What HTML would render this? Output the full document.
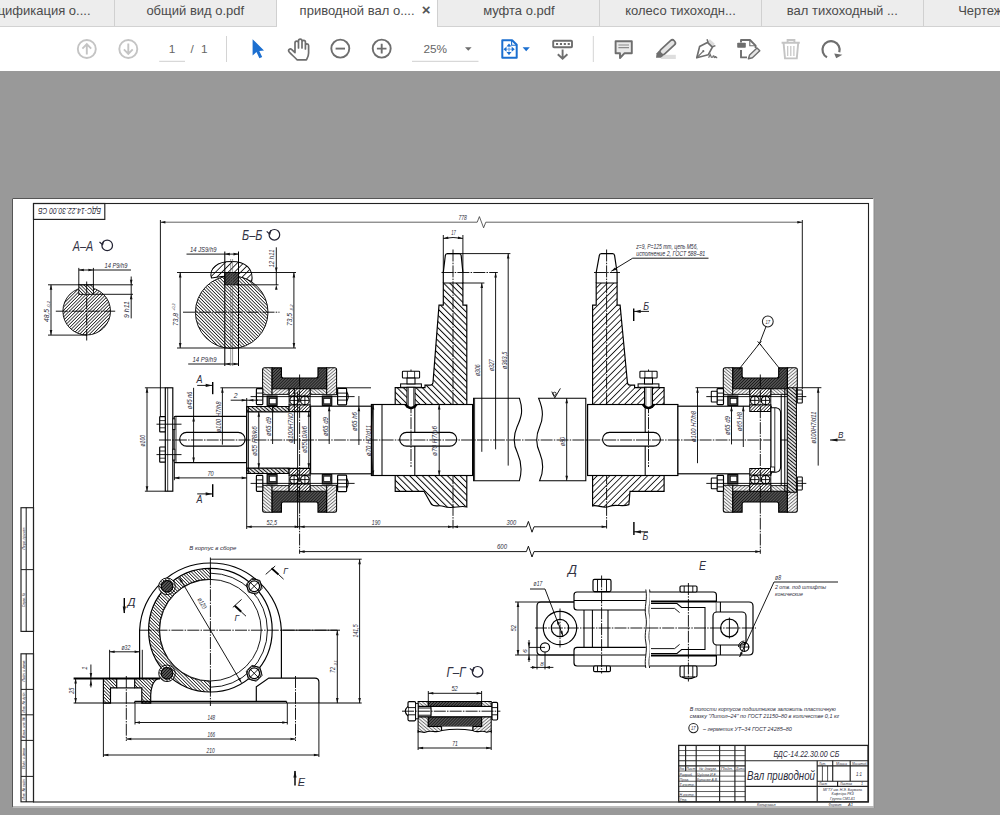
<!DOCTYPE html>
<html lang="ru"><head><meta charset="utf-8"><title>приводной вал о.pdf</title>
<style>
html,body{margin:0;padding:0}
body{width:1000px;height:815px;overflow:hidden;background:#999;position:relative;font-family:"Liberation Sans",sans-serif}
.tabbar{position:absolute;left:0;top:0;width:1000px;height:26px;background:#ededed;border-bottom:1px solid #d2d2d2}
.tab{position:absolute;top:0;height:26px;width:161.6px;box-sizing:border-box;border-right:1px solid #d0d0d0;color:#4b4b4b;font-size:13px;line-height:21px;text-align:center;white-space:nowrap}
.tab.act{background:#fff;height:27px}
.tab .x{position:absolute;left:145px;top:-1px;font-size:15px;font-weight:bold;color:#555}
.toolbar{position:absolute;left:0;top:27px;width:1000px;height:44px;background:#fff}
.tbi{position:absolute;left:0;top:0}
.pg{position:absolute;top:14px;font-size:11.8px;color:#666;line-height:16px}
#dwg{position:absolute;left:0;top:0}
#dwg text{font-family:"Liberation Sans",sans-serif;font-style:italic}
</style></head><body>
<svg id="dwg" width="1000" height="815" viewBox="0 0 1000 815">
<defs>
<pattern id="h1" width="2.35" height="2.35" patternUnits="userSpaceOnUse" patternTransform="rotate(45)"><rect width="2.35" height="2.35" fill="#fff"/><line x1="1.175" y1="0" x2="1.175" y2="2.35" stroke="#000" stroke-width="0.7"/></pattern>
<pattern id="h2" width="2.35" height="2.35" patternUnits="userSpaceOnUse" patternTransform="rotate(-45)"><rect width="2.35" height="2.35" fill="#fff"/><line x1="1.175" y1="0" x2="1.175" y2="2.35" stroke="#000" stroke-width="0.7"/></pattern>
<pattern id="hw1" width="4.45" height="4.45" patternUnits="userSpaceOnUse" patternTransform="rotate(45)"><rect width="4.45" height="4.45" fill="#fff"/><line x1="2.225" y1="0" x2="2.225" y2="4.45" stroke="#000" stroke-width="0.8"/></pattern>
<pattern id="hw2" width="4.45" height="4.45" patternUnits="userSpaceOnUse" patternTransform="rotate(-45)"><rect width="4.45" height="4.45" fill="#fff"/><line x1="2.225" y1="0" x2="2.225" y2="4.45" stroke="#000" stroke-width="1.0"/></pattern>
<pattern id="hd" width="2.1" height="2.1" patternUnits="userSpaceOnUse" patternTransform="rotate(45)"><rect width="2.1" height="2.1" fill="#5a5a5a"/><line x1="1.05" y1="0" x2="1.05" y2="2.1" stroke="#161616" stroke-width="0.85"/></pattern>
<pattern id="hm" width="2.5" height="2.5" patternUnits="userSpaceOnUse" patternTransform="rotate(-50)"><rect width="2.5" height="2.5" fill="#f2f2f2"/><line x1="1.25" y1="0" x2="1.25" y2="2.5" stroke="#444" stroke-width="0.62"/></pattern>
<pattern id="hm2" width="2.5" height="2.5" patternUnits="userSpaceOnUse" patternTransform="rotate(50)"><rect width="2.5" height="2.5" fill="#f2f2f2"/><line x1="1.25" y1="0" x2="1.25" y2="2.5" stroke="#444" stroke-width="0.62"/></pattern>
<pattern id="hc" width="2.7" height="2.7" patternUnits="userSpaceOnUse" patternTransform="rotate(-50)"><rect width="2.7" height="2.7" fill="#fff"/><line x1="1.35" y1="0" x2="1.35" y2="2.7" stroke="#111" stroke-width="1.15"/></pattern>
</defs>
<rect x="12" y="198" width="862" height="610" fill="#fff"/>
<path d="M12.5 807.5V198.5H873.5" fill="none" stroke="#555" stroke-width="1"/>
<path d="M12.5 807H873.5" fill="none" stroke="#777" stroke-width="1"/>
<path d="M874 199V808" fill="none" stroke="#8a8a8a" stroke-width="1"/>
<rect x="33.5" y="203.5" width="835" height="598.5" rx="0" stroke="#222" stroke-width="1.1" fill="none"/>
<rect x="33.5" y="203.5" width="71.3" height="15.9" rx="0" stroke="#222" stroke-width="1.17" fill="none"/>
<text x="101" y="207.6" font-size="8.6" fill="#2c2c3a" textLength="63" lengthAdjust="spacingAndGlyphs" transform="rotate(180 101 207.6)">БДС-14.22.30.00 СБ</text>
<rect x="21" y="507.7" width="12.5" height="123.7" rx="0" stroke="#222" stroke-width="1.17" fill="none"/>
<line x1="26.2" y1="507.7" x2="26.2" y2="631.4" stroke="#000" stroke-width="0.91"/>
<line x1="21" y1="569.6" x2="33.5" y2="569.6" stroke="#222" stroke-width="1.04"/>
<rect x="21" y="653.8" width="12.5" height="148" rx="0" stroke="#222" stroke-width="1.17" fill="none"/>
<line x1="26.2" y1="653.8" x2="26.2" y2="801.8" stroke="#000" stroke-width="0.91"/>
<line x1="21" y1="689.4" x2="33.5" y2="689.4" stroke="#222" stroke-width="1.04"/>
<line x1="21" y1="714.8" x2="33.5" y2="714.8" stroke="#222" stroke-width="1.04"/>
<line x1="21" y1="740.4" x2="33.5" y2="740.4" stroke="#222" stroke-width="1.04"/>
<line x1="21" y1="776.4" x2="33.5" y2="776.4" stroke="#222" stroke-width="1.04"/>
<text x="25.4" y="538" font-size="4.3" fill="#112" textLength="22.75" lengthAdjust="spacingAndGlyphs" transform="rotate(-90 25.4 538)" text-anchor="middle">Перв. примен.</text>
<text x="25.4" y="600" font-size="4.3" fill="#112" textLength="14" lengthAdjust="spacingAndGlyphs" transform="rotate(-90 25.4 600)" text-anchor="middle">Справ. №</text>
<text x="25.4" y="671" font-size="4.3" fill="#112" textLength="21" lengthAdjust="spacingAndGlyphs" transform="rotate(-90 25.4 671)" text-anchor="middle">Подп. и дата</text>
<text x="25.4" y="702" font-size="4.3" fill="#112" textLength="21" lengthAdjust="spacingAndGlyphs" transform="rotate(-90 25.4 702)" text-anchor="middle">Инв. № дубл.</text>
<text x="25.4" y="727.5" font-size="4.3" fill="#112" textLength="21" lengthAdjust="spacingAndGlyphs" transform="rotate(-90 25.4 727.5)" text-anchor="middle">Взам. инв. №</text>
<text x="25.4" y="758.5" font-size="4.3" fill="#112" textLength="21" lengthAdjust="spacingAndGlyphs" transform="rotate(-90 25.4 758.5)" text-anchor="middle">Подп. и дата</text>
<text x="25.4" y="789" font-size="4.3" fill="#112" textLength="21" lengthAdjust="spacingAndGlyphs" transform="rotate(-90 25.4 789)" text-anchor="middle">Инв. № подл.</text>
<rect x="678.7" y="745.4" width="189.3" height="56.4" rx="0" stroke="#222" stroke-width="1.3" fill="none"/>
<line x1="678.7" y1="750.52" x2="745.2" y2="750.52" stroke="#222" stroke-width="0.72"/>
<line x1="678.7" y1="755.65" x2="745.2" y2="755.65" stroke="#222" stroke-width="0.72"/>
<line x1="678.7" y1="760.77" x2="745.2" y2="760.77" stroke="#222" stroke-width="1.17"/>
<line x1="678.7" y1="765.9" x2="745.2" y2="765.9" stroke="#222" stroke-width="1.17"/>
<line x1="678.7" y1="771.02" x2="745.2" y2="771.02" stroke="#222" stroke-width="0.72"/>
<line x1="678.7" y1="776.15" x2="745.2" y2="776.15" stroke="#222" stroke-width="0.72"/>
<line x1="678.7" y1="781.27" x2="745.2" y2="781.27" stroke="#222" stroke-width="0.72"/>
<line x1="678.7" y1="786.4" x2="745.2" y2="786.4" stroke="#222" stroke-width="0.72"/>
<line x1="678.7" y1="791.52" x2="745.2" y2="791.52" stroke="#222" stroke-width="0.72"/>
<line x1="678.7" y1="796.65" x2="745.2" y2="796.65" stroke="#222" stroke-width="0.72"/>
<line x1="685.6" y1="745.4" x2="685.6" y2="771.02" stroke="#222" stroke-width="1.17"/>
<line x1="696.2" y1="745.4" x2="696.2" y2="801.8" stroke="#222" stroke-width="1.17"/>
<line x1="719.6" y1="745.4" x2="719.6" y2="801.8" stroke="#222" stroke-width="1.17"/>
<line x1="734.9" y1="745.4" x2="734.9" y2="801.8" stroke="#222" stroke-width="1.17"/>
<line x1="745.2" y1="745.4" x2="745.2" y2="801.8" stroke="#222" stroke-width="1.17"/>
<line x1="745.2" y1="760.77" x2="868" y2="760.77" stroke="#222" stroke-width="1.17"/>
<line x1="745.2" y1="786.4" x2="868" y2="786.4" stroke="#222" stroke-width="1.17"/>
<line x1="817.2" y1="760.77" x2="817.2" y2="801.8" stroke="#222" stroke-width="1.17"/>
<line x1="817.2" y1="765.9" x2="868" y2="765.9" stroke="#222" stroke-width="1.17"/>
<line x1="817.2" y1="781.27" x2="868" y2="781.27" stroke="#222" stroke-width="1.17"/>
<line x1="822.4" y1="765.9" x2="822.4" y2="781.27" stroke="#222" stroke-width="0.78"/>
<line x1="827.6" y1="765.9" x2="827.6" y2="781.27" stroke="#222" stroke-width="0.78"/>
<line x1="832.7" y1="760.77" x2="832.7" y2="781.27" stroke="#222" stroke-width="1.17"/>
<line x1="850.2" y1="760.77" x2="850.2" y2="781.27" stroke="#222" stroke-width="1.17"/>
<line x1="837.6" y1="781.27" x2="837.6" y2="786.4" stroke="#222" stroke-width="1.17"/>
<text x="806.4" y="757.3" font-size="9.6" fill="#2c2c3a" textLength="66" lengthAdjust="spacingAndGlyphs" text-anchor="middle">БДС-14.22.30.00 СБ</text>
<text x="747" y="779.6" font-size="12.4" fill="#2c2c3a" textLength="68" lengthAdjust="spacingAndGlyphs">Вал приводной</text>
<text x="679.2" y="770.4" font-size="3.8" fill="#2c2c3a" textLength="5.5" lengthAdjust="spacingAndGlyphs">Изм.</text>
<text x="686" y="770.4" font-size="3.8" fill="#2c2c3a" textLength="9.5" lengthAdjust="spacingAndGlyphs">Лист</text>
<text x="699" y="770.4" font-size="3.8" fill="#2c2c3a" textLength="18" lengthAdjust="spacingAndGlyphs">№ докум.</text>
<text x="721" y="770.4" font-size="3.8" fill="#2c2c3a" textLength="12" lengthAdjust="spacingAndGlyphs">Подп.</text>
<text x="736" y="770.4" font-size="3.8" fill="#2c2c3a" textLength="8.5" lengthAdjust="spacingAndGlyphs">Дата</text>
<text x="679.6" y="775.6" font-size="3.8" fill="#2c2c3a" textLength="13.3" lengthAdjust="spacingAndGlyphs">Разраб.</text>
<text x="679.6" y="780.73" font-size="3.8" fill="#2c2c3a" textLength="9.5" lengthAdjust="spacingAndGlyphs">Пров.</text>
<text x="679.6" y="785.85" font-size="3.8" fill="#2c2c3a" textLength="15.2" lengthAdjust="spacingAndGlyphs">Т.контр.</text>
<text x="679.6" y="796.1" font-size="3.8" fill="#2c2c3a" textLength="15.2" lengthAdjust="spacingAndGlyphs">Н.контр.</text>
<text x="679.6" y="801.23" font-size="3.8" fill="#2c2c3a" textLength="7.6" lengthAdjust="spacingAndGlyphs">Утв.</text>
<text x="697" y="775.6" font-size="3.8" fill="#2c2c3a" textLength="20" lengthAdjust="spacingAndGlyphs">Чуднов И.Е.</text>
<text x="697" y="780.7" font-size="3.8" fill="#2c2c3a" textLength="21" lengthAdjust="spacingAndGlyphs">Буланже А.В.</text>
<text x="819" y="765" font-size="3.6" fill="#2c2c3a" textLength="7" lengthAdjust="spacingAndGlyphs">Лит.</text>
<text x="836" y="765" font-size="3.6" fill="#2c2c3a" textLength="11" lengthAdjust="spacingAndGlyphs">Масса</text>
<text x="852" y="765" font-size="3.6" fill="#2c2c3a" textLength="14.5" lengthAdjust="spacingAndGlyphs">Масштаб</text>
<text x="859" y="776" font-size="5" fill="#2c2c3a" textLength="6" lengthAdjust="spacingAndGlyphs" text-anchor="middle">1:1</text>
<text x="819" y="785.4" font-size="3.6" fill="#2c2c3a" textLength="8" lengthAdjust="spacingAndGlyphs">Лист</text>
<text x="840" y="785.4" font-size="3.6" fill="#2c2c3a" textLength="12" lengthAdjust="spacingAndGlyphs">Листов</text>
<text x="861" y="785.4" font-size="3.6" fill="#2c2c3a">1</text>
<text x="842.6" y="790.8" font-size="4.4" fill="#2c2c3a" textLength="39" lengthAdjust="spacingAndGlyphs" text-anchor="middle">МГТУ им. Н.Э. Баумана</text>
<text x="842.6" y="795.2" font-size="4.4" fill="#2c2c3a" textLength="22" lengthAdjust="spacingAndGlyphs" text-anchor="middle">Кафедра РК3</text>
<text x="842.6" y="799.6" font-size="4.4" fill="#2c2c3a" textLength="25" lengthAdjust="spacingAndGlyphs" text-anchor="middle">Группа СМ1-61</text>
<text x="757" y="806" font-size="4" fill="#2c2c3a" textLength="18.5" lengthAdjust="spacingAndGlyphs">Копировал</text>
<text x="828.5" y="806" font-size="4" fill="#2c2c3a" textLength="13" lengthAdjust="spacingAndGlyphs">Формат</text>
<text x="848" y="806" font-size="4" fill="#2c2c3a" textLength="5" lengthAdjust="spacingAndGlyphs">А1</text>
<text x="689.7" y="711.4" font-size="6.2" fill="#2c2c3a" textLength="146" lengthAdjust="spacingAndGlyphs">В полости корпусов подшипников заложить пластичную</text>
<text x="689.7" y="718" font-size="6.2" fill="#2c2c3a" textLength="149.5" lengthAdjust="spacingAndGlyphs">смазку "Литол–24" по ГОСТ 21150–80 в количестве 0,1 кг</text>
<circle cx="693.4" cy="728.1" r="4.6" stroke="#222" stroke-width="1.04" fill="none"/>
<text x="693.3" y="730.2" font-size="5" fill="#2c2c3a" textLength="4.6" lengthAdjust="spacingAndGlyphs" text-anchor="middle">17</text>
<text x="702.9" y="730.8" font-size="6.2" fill="#2c2c3a" textLength="89" lengthAdjust="spacingAndGlyphs">– герметик УТ–34 ГОСТ 24285–80</text>
<text x="72.8" y="250.8" font-size="14.5" fill="#334" textLength="20.4" lengthAdjust="spacingAndGlyphs">А–А</text>
<circle cx="107.2" cy="245.4" r="5.3" stroke="#223" stroke-width="1.23" fill="none"/>
<path d="M99.5 242L102.6 244.8L103.7 240.8" stroke="#223" stroke-width="1.17" fill="none"/>
<circle cx="86.7" cy="311.2" r="23.8" fill="url(#h1)" stroke="#000" stroke-width="0.9"/>
<rect x="78.8" y="284.8" width="14.6" height="9.5" fill="url(#h2)" stroke="#000" stroke-width="0.9"/>
<line x1="78.8" y1="267.9" x2="78.8" y2="285" stroke="#000" stroke-width="0.91"/>
<line x1="93.4" y1="267.9" x2="93.4" y2="285" stroke="#000" stroke-width="0.91"/>
<line x1="78.8" y1="270" x2="93.4" y2="270" stroke="#000" stroke-width="0.91"/>
<path d="M78.8 270L83.8 268.7L83.8 271.3Z" fill="#111"/>
<path d="M93.4 270L88.4 271.3L88.4 268.7Z" fill="#111"/>
<line x1="93.4" y1="270" x2="131" y2="270" stroke="#000" stroke-width="0.91"/>
<text x="104.5" y="267.8" font-size="6.8" fill="#2c2c3a" textLength="23" lengthAdjust="spacingAndGlyphs">14 P9/h9</text>
<line x1="48" y1="284.8" x2="133" y2="284.8" stroke="#000" stroke-width="0.91"/>
<line x1="93.4" y1="294.3" x2="133" y2="294.3" stroke="#000" stroke-width="0.91"/>
<line x1="131.2" y1="276.5" x2="131.2" y2="318.4" stroke="#000" stroke-width="0.91"/>
<path d="M131.2 284.8L129.9 279.8L132.5 279.8Z" fill="#111"/>
<path d="M131.2 294.3L132.5 299.3L129.9 299.3Z" fill="#111"/>
<text x="129.3" y="318" font-size="6.8" fill="#2c2c3a" textLength="17" lengthAdjust="spacingAndGlyphs" transform="rotate(-90 129.3 318)">9 h11</text>
<line x1="48" y1="335.1" x2="87" y2="335.1" stroke="#000" stroke-width="0.91"/>
<line x1="51" y1="284.8" x2="51" y2="335.1" stroke="#000" stroke-width="0.91"/>
<path d="M51 284.8L52.3 289.8L49.7 289.8Z" fill="#111"/>
<path d="M51 335.1L49.7 330.1L52.3 330.1Z" fill="#111"/>
<text x="49" y="322" font-size="6.8" fill="#2c2c3a" textLength="13" lengthAdjust="spacingAndGlyphs" transform="rotate(-90 49 322)">48,5</text>
<text x="50.3" y="308" font-size="4.2" fill="#2c2c3a" textLength="7" lengthAdjust="spacingAndGlyphs" transform="rotate(-90 50.3 308)">-0,2</text>
<line x1="55.8" y1="311.2" x2="115.2" y2="311.2" stroke="#000" stroke-width="0.91" stroke-dasharray="12 1.2 1.5 1.2"/>
<line x1="86.7" y1="281.5" x2="86.7" y2="340.5" stroke="#000" stroke-width="0.91" stroke-dasharray="12 1.2 1.5 1.2"/>
<text x="242" y="240" font-size="14.3" fill="#334" textLength="20.4" lengthAdjust="spacingAndGlyphs">Б–Б</text>
<circle cx="274.4" cy="234.8" r="5.3" stroke="#223" stroke-width="1.23" fill="none"/>
<path d="M266.7 231.4L269.8 234.2L270.9 230.2" stroke="#223" stroke-width="1.17" fill="none"/>
<path d="M211.5 278C208.5 268 218 261.6 231 261.6C245 261.4 254.5 268.5 251.5 282.5C246 277.8 240 276.3 231.7 275.9C223 276 216.5 277 211.5 278Z" fill="url(#hw1)" stroke="#000" stroke-width="1.04"/>
<circle cx="231.7" cy="312.2" r="36.3" fill="url(#h2)" stroke="#000" stroke-width="0.9"/>
<rect x="224.8" y="272.5" width="13.7" height="12.3" fill="url(#hd)" stroke="#000" stroke-width="0.9"/>
<line x1="224.8" y1="251.5" x2="224.8" y2="366" stroke="#000" stroke-width="1.04"/>
<line x1="238.5" y1="251.5" x2="238.5" y2="366" stroke="#000" stroke-width="1.04"/>
<line x1="230.7" y1="259" x2="230.7" y2="366" stroke="#555" stroke-width="0.59"/>
<line x1="232.6" y1="259" x2="232.6" y2="366" stroke="#555" stroke-width="0.59"/>
<line x1="186.5" y1="254.1" x2="224.8" y2="254.1" stroke="#000" stroke-width="0.91"/>
<line x1="224.8" y1="254.1" x2="238.5" y2="254.1" stroke="#000" stroke-width="0.91"/>
<path d="M224.8 254.1L229.8 252.8L229.8 255.4Z" fill="#111"/>
<path d="M238.5 254.1L233.5 255.4L233.5 252.8Z" fill="#111"/>
<text x="190" y="251.8" font-size="6.8" fill="#2c2c3a" textLength="26.5" lengthAdjust="spacingAndGlyphs">14 JS9/h9</text>
<line x1="188.2" y1="364" x2="224.8" y2="364" stroke="#000" stroke-width="0.91"/>
<line x1="224.8" y1="364" x2="238.5" y2="364" stroke="#000" stroke-width="0.91"/>
<path d="M224.8 364L229.8 362.7L229.8 365.3Z" fill="#111"/>
<path d="M238.5 364L233.5 365.3L233.5 362.7Z" fill="#111"/>
<text x="192.5" y="361.7" font-size="6.8" fill="#2c2c3a" textLength="24" lengthAdjust="spacingAndGlyphs">14 P9/h9</text>
<line x1="177" y1="272.5" x2="296" y2="272.5" stroke="#000" stroke-width="0.91"/>
<line x1="177" y1="348" x2="296" y2="348" stroke="#000" stroke-width="0.91"/>
<line x1="180.2" y1="272.5" x2="180.2" y2="348" stroke="#000" stroke-width="0.91"/>
<path d="M180.2 272.5L181.5 277.5L178.9 277.5Z" fill="#111"/>
<path d="M180.2 348L178.9 343L181.5 343Z" fill="#111"/>
<line x1="293.9" y1="272.5" x2="293.9" y2="348" stroke="#000" stroke-width="0.91"/>
<path d="M293.9 272.5L295.2 277.5L292.6 277.5Z" fill="#111"/>
<path d="M293.9 348L292.6 343L295.2 343Z" fill="#111"/>
<text x="178.2" y="326" font-size="6.8" fill="#2c2c3a" textLength="13" lengthAdjust="spacingAndGlyphs" transform="rotate(-90 178.2 326)">73,8</text>
<text x="174.5" y="311" font-size="4.2" fill="#2c2c3a" textLength="7.5" lengthAdjust="spacingAndGlyphs" transform="rotate(-90 174.5 311)">+0,2</text>
<text x="291.8" y="326" font-size="6.8" fill="#2c2c3a" textLength="13" lengthAdjust="spacingAndGlyphs" transform="rotate(-90 291.8 326)">73,5</text>
<text x="293.2" y="311.5" font-size="4.2" fill="#2c2c3a" textLength="7" lengthAdjust="spacingAndGlyphs" transform="rotate(-90 293.2 311.5)">-0,2</text>
<line x1="238.5" y1="284.8" x2="278.5" y2="284.8" stroke="#000" stroke-width="0.91"/>
<line x1="276.3" y1="247.3" x2="276.3" y2="285" stroke="#000" stroke-width="0.91"/>
<path d="M276.3 272.5L275 267.5L277.6 267.5Z" fill="#111"/>
<path d="M276.3 284.8L277.6 289.8L275 289.8Z" fill="#111"/>
<text x="274.4" y="267.5" font-size="6.8" fill="#2c2c3a" textLength="18" lengthAdjust="spacingAndGlyphs" transform="rotate(-90 274.4 267.5)">12 h11</text>
<line x1="183" y1="312.2" x2="279.5" y2="312.2" stroke="#000" stroke-width="0.91" stroke-dasharray="12 1.2 1.5 1.2"/>
<line x1="160.4" y1="220" x2="160.4" y2="416.5" stroke="#000" stroke-width="0.91"/>
<line x1="802.3" y1="220" x2="802.3" y2="389" stroke="#000" stroke-width="0.91"/>
<path d="M160.4 222.2H477.2L479.4 216.6L483.6 227.8L485.8 222.2H802.3" stroke="#333" stroke-width="0.78" fill="none"/>
<path d="M160.4 222.2L165.4 220.9L165.4 223.5Z" fill="#111"/>
<path d="M802.3 222.2L797.3 223.5L797.3 220.9Z" fill="#111"/>
<text x="458.4" y="220.3" font-size="6.8" fill="#2c2c3a" textLength="8.5" lengthAdjust="spacingAndGlyphs">778</text>
<path d="M443.3 283H462.9V305.2H466.8V404.5H395.2V387.7H425V385.2H430.4Q432.7 385 433 382.4L439 305.2H443.3Z" fill="url(#hw2)" stroke="#000" stroke-width="1.17"/>
<path d="M395.2 475.5H466.8V507C460 505 452 509.5 444 506.5C439 504.5 435 507.5 431.6 504.6L424 491.3H395.2Z" fill="url(#hw2)" stroke="#000" stroke-width="1.17"/>
<path d="M443.3 283V272.5L445.3 255.6Q445.5 253.6 447.3 253.6H459.2Q461 253.6 461.2 255.6L462.9 272.5V283" stroke="#000" stroke-width="1.17" fill="none"/>
<path d="M596.2 283H617.1V305.2H620.1L627.4 382.4Q627.7 385 630 385.2H634.6V387.7H664.1V404.5H592.6V305.2H596.2Z" fill="url(#hw1)" stroke="#000" stroke-width="1.17"/>
<path d="M592.6 475.5H664.1V491.3H630L628.9 504.6C622 507.5 616 503.5 609 506.5C603 509 598 504.5 592.6 505.9Z" fill="url(#hw1)" stroke="#000" stroke-width="1.17"/>
<path d="M596.2 283V272.5L599.3 255.6Q599.5 253.6 601.3 253.6H612.6Q614.4 253.6 614.6 255.6L617.1 272.5V283" stroke="#000" stroke-width="1.17" fill="none"/>
<line x1="453" y1="249.5" x2="453" y2="528.5" stroke="#000" stroke-width="0.91" stroke-dasharray="12 1.2 1.5 1.2"/>
<line x1="606.6" y1="249.5" x2="606.6" y2="528.5" stroke="#000" stroke-width="0.91" stroke-dasharray="12 1.2 1.5 1.2"/>
<line x1="443.3" y1="235" x2="443.3" y2="272.5" stroke="#000" stroke-width="0.91"/>
<line x1="462.9" y1="235" x2="462.9" y2="272.5" stroke="#000" stroke-width="0.91"/>
<path d="M443.3 238.4Q453 236.6 462.9 238.4" stroke="#000" stroke-width="0.91" fill="none"/>
<path d="M443.3 238.4L448.07 236.42L448.43 238.99Z" fill="#111"/>
<path d="M462.9 238.4L457.77 238.99L458.13 236.42Z" fill="#111"/>
<text x="451.2" y="234.6" font-size="6.8" fill="#2c2c3a" textLength="4.6" lengthAdjust="spacingAndGlyphs">17</text>
<line x1="447" y1="253.6" x2="510.4" y2="253.6" stroke="#000" stroke-width="0.91"/>
<line x1="441.5" y1="272.5" x2="497.8" y2="272.5" stroke="#000" stroke-width="0.91" stroke-dasharray="12 1.2 1.5 1.2"/>
<line x1="462.9" y1="283" x2="484.4" y2="283" stroke="#000" stroke-width="0.91"/>
<line x1="594" y1="272.5" x2="620" y2="272.5" stroke="#000" stroke-width="0.91" stroke-dasharray="12 1.2 1.5 1.2"/>
<path d="M611.3 271.2L632.7 258.2H708.5" stroke="#000" stroke-width="0.91" fill="none"/>
<path d="M611.3 271.2L614.92 267.51L616.26 269.74Z" fill="#111"/>
<text x="636.3" y="248.8" font-size="7" fill="#2c2c3a" textLength="61.5" lengthAdjust="spacingAndGlyphs">z=9, P=125 mm, цепь М56,</text>
<text x="636.3" y="256.2" font-size="7" fill="#2c2c3a" textLength="69" lengthAdjust="spacingAndGlyphs">исполнение 2, ГОСТ 588–81</text>
<line x1="633.7" y1="308.5" x2="633.7" y2="321" stroke="#000" stroke-width="1.43"/>
<line x1="633.7" y1="311.4" x2="649" y2="311.4" stroke="#000" stroke-width="0.91"/>
<path d="M634.2 311.4L640.7 309.8L640.7 313Z" fill="#111"/>
<text x="643.2" y="310.2" font-size="10.4" fill="#2c2c3a" textLength="5.8" lengthAdjust="spacingAndGlyphs">Б</text>
<line x1="633.9" y1="522" x2="633.9" y2="535" stroke="#000" stroke-width="1.43"/>
<line x1="633.9" y1="531.8" x2="648" y2="531.8" stroke="#000" stroke-width="0.91"/>
<path d="M634.4 531.8L640.9 530.2L640.9 533.4Z" fill="#111"/>
<text x="642.4" y="540.4" font-size="10.4" fill="#2c2c3a" textLength="5.8" lengthAdjust="spacingAndGlyphs">Б</text>
<rect x="174.1" y="416.4" width="72.6" height="46.2" rx="1.2" stroke="#000" stroke-width="1.17" fill="#fff"/>
<line x1="176" y1="416.4" x2="176" y2="462.6" stroke="#000" stroke-width="0.78"/>
<rect x="179.7" y="432.3" width="65.4" height="13.8" rx="6.9" stroke="#000" stroke-width="1.17" fill="#fff"/>
<rect x="246.7" y="411.8" width="64" height="56.4" rx="0" stroke="#000" stroke-width="1.04" fill="#fff"/>
<path d="M246.7 406.6H289V411.8H246.7Z" fill="url(#hc)" stroke="#000" stroke-width="1.04"/>
<path d="M246.7 468.2H289V473.4H246.7Z" fill="url(#hc)" stroke="#000" stroke-width="1.04"/>
<line x1="246.7" y1="398" x2="246.7" y2="529" stroke="#000" stroke-width="0.91"/>
<line x1="248.4" y1="406.6" x2="248.4" y2="473.4" stroke="#000" stroke-width="0.91"/>
<rect x="310.6" y="406.2" width="61" height="67.6" rx="0" stroke="#000" stroke-width="1.17" fill="#fff"/>
<rect x="371.4" y="404.5" width="101.4" height="71" rx="0" stroke="#000" stroke-width="1.17" fill="#fff"/>
<line x1="373" y1="404.5" x2="373" y2="475.5" stroke="#000" stroke-width="0.78"/>
<line x1="382" y1="404.5" x2="382" y2="475.5" stroke="#000" stroke-width="1.04"/>
<line x1="414.8" y1="406" x2="414.8" y2="475.5" stroke="#000" stroke-width="1.04"/>
<path d="M373 404.5Q369.8 440 373 475.5" stroke="#000" stroke-width="0.78" fill="none"/>
<path d="M473.6 398.2H519.4C523.5 411 521.5 417 517 427C513.5 435 513.5 445 517.5 453C521.5 462 522.5 470 519.4 480.7H473.6Z" stroke="#000" stroke-width="1.1" fill="#fff"/>
<path d="M585.8 398.2H538.6C544 411 543 419 539.6 427C536 435 536 445 539.8 453C543.5 462 544 471 539.6 480.7H585.8Z" stroke="#000" stroke-width="1.1" fill="#fff"/>
<line x1="472.6" y1="404.5" x2="472.6" y2="475.5" stroke="#000" stroke-width="1.04"/>
<line x1="474.6" y1="398.2" x2="474.6" y2="480.7" stroke="#000" stroke-width="0.78"/>
<line x1="587.6" y1="404.5" x2="587.6" y2="475.5" stroke="#000" stroke-width="1.04"/>
<rect x="587.6" y="404.5" width="90.3" height="71" rx="0" stroke="#000" stroke-width="1.17" fill="#fff"/>
<line x1="645.2" y1="404.5" x2="645.2" y2="475.5" stroke="#000" stroke-width="1.04"/>
<rect x="677.9" y="406.2" width="93.2" height="67.6" rx="0" stroke="#000" stroke-width="1.17" fill="#fff"/>
<rect x="399.7" y="432.3" width="57" height="13.8" rx="6.9" stroke="#000" stroke-width="1.17" fill="#fff"/>
<rect x="602.6" y="432.3" width="57.8" height="13.8" rx="6.9" stroke="#000" stroke-width="1.17" fill="#fff"/>
<path d="M551.8 391.6L554.8 397.8L560.4 388.4" stroke="#000" stroke-width="0.91" fill="none"/>
<circle cx="554.6" cy="393.8" r="1.6" stroke="#000" stroke-width="0.78" fill="none"/>
<rect x="165.3" y="387.8" width="7.5" height="103.4" rx="0" stroke="#000" stroke-width="1.17" fill="#fff"/>
<line x1="167.7" y1="387.8" x2="167.7" y2="491.2" stroke="#000" stroke-width="0.78"/>
<rect x="159.7" y="416.6" width="5.6" height="15.2" rx="0.6" stroke="#000" stroke-width="1.17" fill="#fff"/>
<line x1="159.7" y1="420.6" x2="165.3" y2="420.6" stroke="#000" stroke-width="0.78"/>
<line x1="159.7" y1="427.8" x2="165.3" y2="427.8" stroke="#000" stroke-width="0.78"/>
<rect x="172.8" y="418.8" width="2.1" height="10.8" rx="0" stroke="#000" stroke-width="0.91" fill="#fff"/>
<line x1="156.5" y1="424.2" x2="181.5" y2="424.2" stroke="#000" stroke-width="0.91"/>
<rect x="159.7" y="447" width="5.6" height="15.2" rx="0.6" stroke="#000" stroke-width="1.17" fill="#fff"/>
<line x1="159.7" y1="451" x2="165.3" y2="451" stroke="#000" stroke-width="0.78"/>
<line x1="159.7" y1="458.2" x2="165.3" y2="458.2" stroke="#000" stroke-width="0.78"/>
<rect x="172.8" y="449.2" width="2.1" height="10.8" rx="0" stroke="#000" stroke-width="0.91" fill="#fff"/>
<line x1="156.5" y1="454.6" x2="181.5" y2="454.6" stroke="#000" stroke-width="0.91"/>
<line x1="159" y1="440" x2="790" y2="440" stroke="#000" stroke-width="0.91" stroke-dasharray="12 1.2 1.5 1.2"/>
<line x1="481.8" y1="283" x2="481.8" y2="451.8" stroke="#000" stroke-width="0.91"/>
<path d="M481.8 283L483.1 288L480.5 288Z" fill="#111"/>
<text x="480.2" y="376" font-size="6.8" fill="#2c2c3a" textLength="11.6" lengthAdjust="spacingAndGlyphs" transform="rotate(-90 480.2 376)">ø306</text>
<line x1="495.6" y1="272.5" x2="495.6" y2="449.3" stroke="#000" stroke-width="0.91"/>
<path d="M495.6 272.5L496.9 277.5L494.3 277.5Z" fill="#111"/>
<text x="494" y="371" font-size="6.8" fill="#2c2c3a" textLength="11.6" lengthAdjust="spacingAndGlyphs" transform="rotate(-90 494 371)">ø327</text>
<line x1="508.2" y1="253.6" x2="508.2" y2="465.6" stroke="#000" stroke-width="0.91"/>
<path d="M508.2 253.6L509.5 258.6L506.9 258.6Z" fill="#111"/>
<text x="506.6" y="369" font-size="6.8" fill="#2c2c3a" textLength="17.4" lengthAdjust="spacingAndGlyphs" transform="rotate(-90 506.6 369)">ø363,5</text>
<path d="M262.6 369.8Q262.6 367.8 264.6 367.8H272.1V394.8H262.6Z" fill="url(#hm)" stroke="#000" stroke-width="1.04"/>
<path d="M336.6 369.8Q336.6 367.8 334.6 367.8H326.6V394.8H336.6Z" fill="url(#hm2)" stroke="#000" stroke-width="1.04"/>
<path d="M272.1 367.8H281.4V376Q281.4 378 283.4 378H316Q318 378 318 376V367.8H326.6V388.8H272.1Z" fill="url(#hd)" stroke="#000" stroke-width="1.17"/>
<path d="M272.1 388.8H289.1V394.4H272.1Z" fill="url(#hm2)" stroke="#000" stroke-width="0.91"/>
<path d="M310.1 388.8H326.6V394.4H310.1Z" fill="url(#hm)" stroke="#000" stroke-width="0.91"/>
<path d="M289.1 388.8H310.1V396.2H289.1Z" fill="url(#h1)" stroke="#000" stroke-width="1.04"/>
<path d="M289.1 404.8H310.1V411.6H289.1Z" fill="url(#h1)" stroke="#000" stroke-width="1.04"/>
<rect x="289.1" y="396.2" width="21" height="8.6" rx="0" stroke="#000" stroke-width="0.91" fill="#fff"/>
<circle cx="294.1" cy="400.4" r="4.3" stroke="#000" stroke-width="1.17" fill="#fff"/>
<line x1="290.1" y1="400.4" x2="298.1" y2="400.4" stroke="#000" stroke-width="0.91"/>
<line x1="294.1" y1="396.5" x2="294.1" y2="404.3" stroke="#000" stroke-width="0.91"/>
<circle cx="304.9" cy="400.4" r="4.3" stroke="#000" stroke-width="1.17" fill="#fff"/>
<line x1="300.9" y1="400.4" x2="308.9" y2="400.4" stroke="#000" stroke-width="0.91"/>
<line x1="304.9" y1="396.5" x2="304.9" y2="404.3" stroke="#000" stroke-width="0.91"/>
<rect x="267.1" y="396" width="10" height="9.4" rx="0" stroke="#000" stroke-width="1.04" fill="#4a4a4a"/>
<rect x="269.6" y="398.6" width="6.5" height="5.2" rx="0" stroke="#000" stroke-width="0.65" fill="#fff"/>
<rect x="322.3" y="396" width="9.5" height="9.4" rx="0" stroke="#000" stroke-width="1.04" fill="#4a4a4a"/>
<rect x="323.8" y="398.6" width="6.5" height="5.2" rx="0" stroke="#000" stroke-width="0.65" fill="#fff"/>
<rect x="256.4" y="388.6" width="6.4" height="16" rx="0.8" stroke="#000" stroke-width="1.17" fill="#fff"/>
<line x1="256.4" y1="393.1" x2="262.8" y2="393.1" stroke="#000" stroke-width="0.91"/>
<line x1="256.4" y1="400.1" x2="262.8" y2="400.1" stroke="#000" stroke-width="0.91"/>
<rect x="337.6" y="388.4" width="9" height="16.4" rx="0.8" stroke="#000" stroke-width="1.17" fill="#fff"/>
<line x1="337.6" y1="393.1" x2="346.6" y2="393.1" stroke="#000" stroke-width="0.91"/>
<line x1="337.6" y1="400.1" x2="346.6" y2="400.1" stroke="#000" stroke-width="0.91"/>
<path d="M346.6 391.6Q349.8 396.6 346.6 401.6" stroke="#000" stroke-width="1.04" fill="none"/>
<line x1="250.6" y1="396.6" x2="354.6" y2="396.6" stroke="#000" stroke-width="0.91"/>
<path d="M262.6 510.2Q262.6 512.2 264.6 512.2H272.1V485.2H262.6Z" fill="url(#hm)" stroke="#000" stroke-width="1.04"/>
<path d="M336.6 510.2Q336.6 512.2 334.6 512.2H326.6V485.2H336.6Z" fill="url(#hm2)" stroke="#000" stroke-width="1.04"/>
<path d="M272.1 512.2H281.4V504Q281.4 502 283.4 502H316Q318 502 318 504V512.2H326.6V491.2H272.1Z" fill="url(#hd)" stroke="#000" stroke-width="1.17"/>
<path d="M272.1 491.2H289.1V485.6H272.1Z" fill="url(#hm2)" stroke="#000" stroke-width="0.91"/>
<path d="M310.1 491.2H326.6V485.6H310.1Z" fill="url(#hm)" stroke="#000" stroke-width="0.91"/>
<path d="M289.1 491.2H310.1V483.8H289.1Z" fill="url(#h1)" stroke="#000" stroke-width="1.04"/>
<path d="M289.1 475.2H310.1V468.4H289.1Z" fill="url(#h1)" stroke="#000" stroke-width="1.04"/>
<rect x="289.1" y="475.2" width="21" height="8.6" rx="0" stroke="#000" stroke-width="0.91" fill="#fff"/>
<circle cx="294.1" cy="479.6" r="4.3" stroke="#000" stroke-width="1.17" fill="#fff"/>
<line x1="290.1" y1="479.6" x2="298.1" y2="479.6" stroke="#000" stroke-width="0.91"/>
<line x1="294.1" y1="483.5" x2="294.1" y2="475.7" stroke="#000" stroke-width="0.91"/>
<circle cx="304.9" cy="479.6" r="4.3" stroke="#000" stroke-width="1.17" fill="#fff"/>
<line x1="300.9" y1="479.6" x2="308.9" y2="479.6" stroke="#000" stroke-width="0.91"/>
<line x1="304.9" y1="483.5" x2="304.9" y2="475.7" stroke="#000" stroke-width="0.91"/>
<rect x="267.1" y="474.6" width="10" height="9.4" rx="0" stroke="#000" stroke-width="1.04" fill="#4a4a4a"/>
<rect x="269.6" y="476.2" width="6.5" height="5.2" rx="0" stroke="#000" stroke-width="0.65" fill="#fff"/>
<rect x="322.3" y="474.6" width="9.5" height="9.4" rx="0" stroke="#000" stroke-width="1.04" fill="#4a4a4a"/>
<rect x="323.8" y="476.2" width="6.5" height="5.2" rx="0" stroke="#000" stroke-width="0.65" fill="#fff"/>
<rect x="256.4" y="475.4" width="6.4" height="16" rx="0.8" stroke="#000" stroke-width="1.17" fill="#fff"/>
<line x1="256.4" y1="479.9" x2="262.8" y2="479.9" stroke="#000" stroke-width="0.91"/>
<line x1="256.4" y1="486.9" x2="262.8" y2="486.9" stroke="#000" stroke-width="0.91"/>
<rect x="337.6" y="475.2" width="9" height="16.4" rx="0.8" stroke="#000" stroke-width="1.17" fill="#fff"/>
<line x1="337.6" y1="479.9" x2="346.6" y2="479.9" stroke="#000" stroke-width="0.91"/>
<line x1="337.6" y1="486.9" x2="346.6" y2="486.9" stroke="#000" stroke-width="0.91"/>
<path d="M346.6 478.4Q349.8 483.4 346.6 488.4" stroke="#000" stroke-width="1.04" fill="none"/>
<line x1="250.6" y1="483.4" x2="354.6" y2="483.4" stroke="#000" stroke-width="0.91"/>
<line x1="299.6" y1="374.5" x2="299.6" y2="553.8" stroke="#000" stroke-width="0.91" stroke-dasharray="12 1.2 1.5 1.2"/>
<path d="M723.3 369.8Q723.3 367.8 725.3 367.8H732.8V394.8H723.3Z" fill="url(#hm)" stroke="#000" stroke-width="1.04"/>
<path d="M797.3 369.8Q797.3 367.8 795.3 367.8H787.3V394.8H797.3Z" fill="url(#hm2)" stroke="#000" stroke-width="1.04"/>
<path d="M732.8 367.8H742.1V376Q742.1 378 744.1 378H776.7Q778.7 378 778.7 376V367.8H787.3V388.8H732.8Z" fill="url(#hd)" stroke="#000" stroke-width="1.17"/>
<path d="M732.8 388.8H749.8V394.4H732.8Z" fill="url(#hm2)" stroke="#000" stroke-width="0.91"/>
<path d="M770.8 388.8H787.3V394.4H770.8Z" fill="url(#hm)" stroke="#000" stroke-width="0.91"/>
<path d="M749.8 388.8H770.8V396.2H749.8Z" fill="url(#h1)" stroke="#000" stroke-width="1.04"/>
<path d="M749.8 404.8H770.8V411.6H749.8Z" fill="url(#h1)" stroke="#000" stroke-width="1.04"/>
<rect x="749.8" y="396.2" width="21" height="8.6" rx="0" stroke="#000" stroke-width="0.91" fill="#fff"/>
<circle cx="754.8" cy="400.4" r="4.3" stroke="#000" stroke-width="1.17" fill="#fff"/>
<line x1="750.8" y1="400.4" x2="758.8" y2="400.4" stroke="#000" stroke-width="0.91"/>
<line x1="754.8" y1="396.5" x2="754.8" y2="404.3" stroke="#000" stroke-width="0.91"/>
<circle cx="765.6" cy="400.4" r="4.3" stroke="#000" stroke-width="1.17" fill="#fff"/>
<line x1="761.6" y1="400.4" x2="769.6" y2="400.4" stroke="#000" stroke-width="0.91"/>
<line x1="765.6" y1="396.5" x2="765.6" y2="404.3" stroke="#000" stroke-width="0.91"/>
<rect x="727.8" y="396" width="10" height="9.4" rx="0" stroke="#000" stroke-width="1.04" fill="#4a4a4a"/>
<rect x="730.3" y="398.6" width="6.5" height="5.2" rx="0" stroke="#000" stroke-width="0.65" fill="#fff"/>
<rect x="717.1" y="388.6" width="6.4" height="16" rx="0.8" stroke="#000" stroke-width="1.17" fill="#fff"/>
<line x1="717.1" y1="393.1" x2="723.5" y2="393.1" stroke="#000" stroke-width="0.91"/>
<line x1="717.1" y1="400.1" x2="723.5" y2="400.1" stroke="#000" stroke-width="0.91"/>
<rect x="711.3" y="391.2" width="5.8" height="10.8" rx="0.6" stroke="#000" stroke-width="1.04" fill="#fff"/>
<rect x="797.3" y="390.1" width="5" height="13" rx="0.6" stroke="#000" stroke-width="1.04" fill="#fff"/>
<line x1="797.3" y1="394.1" x2="802.3" y2="394.1" stroke="#000" stroke-width="0.78"/>
<line x1="797.3" y1="399.1" x2="802.3" y2="399.1" stroke="#000" stroke-width="0.78"/>
<line x1="706.3" y1="396.6" x2="806.3" y2="396.6" stroke="#000" stroke-width="0.91"/>
<path d="M723.3 510.2Q723.3 512.2 725.3 512.2H732.8V485.2H723.3Z" fill="url(#hm)" stroke="#000" stroke-width="1.04"/>
<path d="M797.3 510.2Q797.3 512.2 795.3 512.2H787.3V485.2H797.3Z" fill="url(#hm2)" stroke="#000" stroke-width="1.04"/>
<path d="M732.8 512.2H742.1V504Q742.1 502 744.1 502H776.7Q778.7 502 778.7 504V512.2H787.3V491.2H732.8Z" fill="url(#hd)" stroke="#000" stroke-width="1.17"/>
<path d="M732.8 491.2H749.8V485.6H732.8Z" fill="url(#hm2)" stroke="#000" stroke-width="0.91"/>
<path d="M770.8 491.2H787.3V485.6H770.8Z" fill="url(#hm)" stroke="#000" stroke-width="0.91"/>
<path d="M749.8 491.2H770.8V483.8H749.8Z" fill="url(#h1)" stroke="#000" stroke-width="1.04"/>
<path d="M749.8 475.2H770.8V468.4H749.8Z" fill="url(#h1)" stroke="#000" stroke-width="1.04"/>
<rect x="749.8" y="475.2" width="21" height="8.6" rx="0" stroke="#000" stroke-width="0.91" fill="#fff"/>
<circle cx="754.8" cy="479.6" r="4.3" stroke="#000" stroke-width="1.17" fill="#fff"/>
<line x1="750.8" y1="479.6" x2="758.8" y2="479.6" stroke="#000" stroke-width="0.91"/>
<line x1="754.8" y1="483.5" x2="754.8" y2="475.7" stroke="#000" stroke-width="0.91"/>
<circle cx="765.6" cy="479.6" r="4.3" stroke="#000" stroke-width="1.17" fill="#fff"/>
<line x1="761.6" y1="479.6" x2="769.6" y2="479.6" stroke="#000" stroke-width="0.91"/>
<line x1="765.6" y1="483.5" x2="765.6" y2="475.7" stroke="#000" stroke-width="0.91"/>
<rect x="727.8" y="474.6" width="10" height="9.4" rx="0" stroke="#000" stroke-width="1.04" fill="#4a4a4a"/>
<rect x="730.3" y="476.2" width="6.5" height="5.2" rx="0" stroke="#000" stroke-width="0.65" fill="#fff"/>
<rect x="717.1" y="475.4" width="6.4" height="16" rx="0.8" stroke="#000" stroke-width="1.17" fill="#fff"/>
<line x1="717.1" y1="479.9" x2="723.5" y2="479.9" stroke="#000" stroke-width="0.91"/>
<line x1="717.1" y1="486.9" x2="723.5" y2="486.9" stroke="#000" stroke-width="0.91"/>
<rect x="711.3" y="478" width="5.8" height="10.8" rx="0.6" stroke="#000" stroke-width="1.04" fill="#fff"/>
<rect x="797.3" y="476.9" width="5" height="13" rx="0.6" stroke="#000" stroke-width="1.04" fill="#fff"/>
<line x1="797.3" y1="480.9" x2="802.3" y2="480.9" stroke="#000" stroke-width="0.78"/>
<line x1="797.3" y1="485.9" x2="802.3" y2="485.9" stroke="#000" stroke-width="0.78"/>
<line x1="706.3" y1="483.4" x2="806.3" y2="483.4" stroke="#000" stroke-width="0.91"/>
<line x1="760.3" y1="374.5" x2="760.3" y2="553.8" stroke="#000" stroke-width="0.91" stroke-dasharray="12 1.2 1.5 1.2"/>
<line x1="297.6" y1="392" x2="297.6" y2="528" stroke="#000" stroke-width="0.91"/>
<path d="M787.3 387.7H796.4V492.3H787.3Z" fill="url(#hc)" stroke="#000" stroke-width="1.04"/>
<line x1="781.2" y1="394.8" x2="781.2" y2="485.2" stroke="#000" stroke-width="1.04"/>
<line x1="784.8" y1="388.8" x2="784.8" y2="491.2" stroke="#000" stroke-width="1.04"/>
<path d="M771 407.8H776Q780.6 408.5 780.6 413V467Q780.6 471.5 776 472.2H771" stroke="#000" stroke-width="1.04" fill="#fff"/>
<line x1="771" y1="406.2" x2="771" y2="473.8" stroke="#000" stroke-width="1.04"/>
<line x1="774.8" y1="408" x2="774.8" y2="472" stroke="#000" stroke-width="0.78"/>
<rect x="770.6" y="467" width="4" height="4.5" rx="0" stroke="#000" stroke-width="0.78" fill="#fff"/>
<circle cx="767.8" cy="321.5" r="5.4" stroke="#222" stroke-width="1.04" fill="none"/>
<text x="767.7" y="323.6" font-size="5" fill="#2c2c3a" textLength="4.6" lengthAdjust="spacingAndGlyphs" text-anchor="middle">17</text>
<line x1="766" y1="326.6" x2="759.5" y2="343.4" stroke="#000" stroke-width="0.91"/>
<line x1="759.5" y1="343.4" x2="738.7" y2="369.6" stroke="#000" stroke-width="0.91"/>
<line x1="759.5" y1="343.4" x2="780.4" y2="369.6" stroke="#000" stroke-width="0.91"/>
<line x1="757.6" y1="341.4" x2="761.4" y2="345.4" stroke="#000" stroke-width="0.91"/>
<line x1="757.6" y1="345.4" x2="761.4" y2="341.4" stroke="#000" stroke-width="0.91"/>
<line x1="411" y1="369.5" x2="411" y2="467" stroke="#000" stroke-width="0.91" stroke-dasharray="12 1.2 1.5 1.2"/>
<rect x="402.4" y="371.3" width="17.2" height="6.8" rx="0.8" stroke="#000" stroke-width="1.04" fill="#fff"/>
<line x1="407.4" y1="371.3" x2="407.4" y2="378.1" stroke="#000" stroke-width="0.78"/>
<line x1="414.6" y1="371.3" x2="414.6" y2="378.1" stroke="#000" stroke-width="0.78"/>
<rect x="400.6" y="383.9" width="20.8" height="3.4" rx="0" stroke="#000" stroke-width="1.04" fill="#fff"/>
<rect x="407" y="378.1" width="8" height="5.8" rx="0" stroke="#000" stroke-width="1.04" fill="#fff"/>
<rect x="407" y="387.3" width="8" height="20" rx="0" stroke="#000" stroke-width="1.04" fill="#fff"/>
<line x1="408.4" y1="387.3" x2="408.4" y2="406" stroke="#000" stroke-width="0.65"/>
<line x1="413.6" y1="387.3" x2="413.6" y2="406" stroke="#000" stroke-width="0.65"/>
<path d="M405.4 404.6Q411 411.6 416.6 404.6" stroke="#000" stroke-width="2.34" fill="none"/>
<line x1="648.5" y1="369.5" x2="648.5" y2="467" stroke="#000" stroke-width="0.91" stroke-dasharray="12 1.2 1.5 1.2"/>
<rect x="639.9" y="371.3" width="17.2" height="6.8" rx="0.8" stroke="#000" stroke-width="1.04" fill="#fff"/>
<line x1="644.9" y1="371.3" x2="644.9" y2="378.1" stroke="#000" stroke-width="0.78"/>
<line x1="652.1" y1="371.3" x2="652.1" y2="378.1" stroke="#000" stroke-width="0.78"/>
<rect x="638.1" y="383.9" width="20.8" height="3.4" rx="0" stroke="#000" stroke-width="1.04" fill="#fff"/>
<rect x="644.5" y="378.1" width="8" height="5.8" rx="0" stroke="#000" stroke-width="1.04" fill="#fff"/>
<rect x="644.5" y="387.3" width="8" height="20" rx="0" stroke="#000" stroke-width="1.04" fill="#fff"/>
<line x1="645.9" y1="387.3" x2="645.9" y2="406" stroke="#000" stroke-width="0.65"/>
<line x1="651.1" y1="387.3" x2="651.1" y2="406" stroke="#000" stroke-width="0.65"/>
<path d="M642.9 404.6Q648.5 411.6 654.1 404.6" stroke="#000" stroke-width="2.34" fill="none"/>
<line x1="144.9" y1="387.8" x2="165.3" y2="387.8" stroke="#000" stroke-width="0.91"/>
<line x1="144.9" y1="491.2" x2="165.3" y2="491.2" stroke="#000" stroke-width="0.91"/>
<line x1="147" y1="387.8" x2="147" y2="491.2" stroke="#000" stroke-width="0.91"/>
<path d="M147 387.8L148.3 392.8L145.7 392.8Z" fill="#111"/>
<path d="M147 491.2L145.7 486.2L148.3 486.2Z" fill="#111"/>
<text x="145.2" y="446.5" font-size="6.8" fill="#2c2c3a" textLength="11.5" lengthAdjust="spacingAndGlyphs" transform="rotate(-90 145.2 446.5)">ø100</text>
<line x1="193.6" y1="387.8" x2="193.6" y2="462.6" stroke="#000" stroke-width="0.91"/>
<path d="M193.6 416.4L194.9 421.4L192.3 421.4Z" fill="#111"/>
<path d="M193.6 462.6L192.3 457.6L194.9 457.6Z" fill="#111"/>
<text x="191.8" y="409" font-size="6.8" fill="#2c2c3a" textLength="17.5" lengthAdjust="spacingAndGlyphs" transform="rotate(-90 191.8 409)">ø45 n6</text>
<text x="196.4" y="382.8" font-size="10.4" fill="#2c2c3a" textLength="6" lengthAdjust="spacingAndGlyphs">А</text>
<line x1="197.2" y1="385.4" x2="212.7" y2="385.4" stroke="#000" stroke-width="0.91"/>
<path d="M212.2 385.4L205.7 387L205.7 383.8Z" fill="#111"/>
<line x1="212.7" y1="382" x2="212.7" y2="394.2" stroke="#000" stroke-width="1.43"/>
<text x="196.4" y="502.6" font-size="10.4" fill="#2c2c3a" textLength="6" lengthAdjust="spacingAndGlyphs">А</text>
<line x1="197.2" y1="493.9" x2="212.7" y2="493.9" stroke="#000" stroke-width="0.91"/>
<path d="M212.2 493.9L205.7 495.5L205.7 492.3Z" fill="#111"/>
<line x1="212.7" y1="484.2" x2="212.7" y2="497" stroke="#000" stroke-width="1.43"/>
<line x1="220.4" y1="387.8" x2="262.6" y2="387.8" stroke="#000" stroke-width="0.91"/>
<line x1="222.4" y1="387.8" x2="222.4" y2="444.7" stroke="#000" stroke-width="0.91"/>
<path d="M222.4 387.8L223.7 392.8L221.1 392.8Z" fill="#111"/>
<text x="220.6" y="432.5" font-size="6.8" fill="#2c2c3a" textLength="31" lengthAdjust="spacingAndGlyphs" transform="rotate(-90 220.6 432.5)">ø100 H7/h8</text>
<line x1="230.7" y1="400.2" x2="258" y2="400.2" stroke="#000" stroke-width="0.91"/>
<path d="M246.7 400.2L241.7 401.5L241.7 398.9Z" fill="#111"/>
<path d="M248.4 400.2L253.4 398.9L253.4 401.5Z" fill="#111"/>
<text x="233.8" y="398.2" font-size="6.8" fill="#2c2c3a">2</text>
<line x1="174.4" y1="462.6" x2="174.4" y2="480.2" stroke="#000" stroke-width="0.91"/>
<line x1="174.4" y1="477.9" x2="246.7" y2="477.9" stroke="#000" stroke-width="0.91"/>
<path d="M174.4 477.9L179.4 476.6L179.4 479.2Z" fill="#111"/>
<path d="M246.7 477.9L241.7 479.2L241.7 476.6Z" fill="#111"/>
<text x="207.4" y="475.8" font-size="7" fill="#2c2c3a" textLength="6.2" lengthAdjust="spacingAndGlyphs">70</text>
<line x1="258.8" y1="411.8" x2="258.8" y2="468.2" stroke="#000" stroke-width="0.91"/>
<path d="M258.8 411.8L260.1 416.8L257.5 416.8Z" fill="#111"/>
<path d="M258.8 468.2L257.5 463.2L260.1 463.2Z" fill="#111"/>
<text x="257.1" y="456" font-size="6.8" fill="#2c2c3a" textLength="30" lengthAdjust="spacingAndGlyphs" transform="rotate(-90 257.1 456)">ø55 H8/k6</text>
<line x1="272.6" y1="406.6" x2="272.6" y2="444" stroke="#000" stroke-width="0.91"/>
<path d="M272.6 406.6L273.9 411.6L271.3 411.6Z" fill="#111"/>
<text x="270.9" y="436" font-size="6.8" fill="#2c2c3a" textLength="19" lengthAdjust="spacingAndGlyphs" transform="rotate(-90 270.9 436)">ø65 d9</text>
<line x1="294.4" y1="388.8" x2="294.4" y2="444" stroke="#000" stroke-width="0.91"/>
<path d="M294.4 388.8L295.7 393.8L293.1 393.8Z" fill="#111"/>
<text x="292.7" y="443" font-size="6.8" fill="#2c2c3a" textLength="30" lengthAdjust="spacingAndGlyphs" transform="rotate(-90 292.7 443)">ø100H7/l0</text>
<line x1="308.8" y1="411.8" x2="308.8" y2="468.2" stroke="#000" stroke-width="0.91"/>
<path d="M308.8 411.8L310.1 416.8L307.5 416.8Z" fill="#111"/>
<path d="M308.8 468.2L307.5 463.2L310.1 463.2Z" fill="#111"/>
<text x="307.1" y="453" font-size="6.8" fill="#2c2c3a" textLength="27" lengthAdjust="spacingAndGlyphs" transform="rotate(-90 307.1 453)">ø55L0/k6</text>
<line x1="329.2" y1="406.2" x2="329.2" y2="444" stroke="#000" stroke-width="0.91"/>
<path d="M329.2 406.2L330.5 411.2L327.9 411.2Z" fill="#111"/>
<text x="327.5" y="436" font-size="6.8" fill="#2c2c3a" textLength="19" lengthAdjust="spacingAndGlyphs" transform="rotate(-90 327.5 436)">ø65 d9</text>
<line x1="358.9" y1="406.2" x2="358.9" y2="445" stroke="#000" stroke-width="0.91"/>
<path d="M358.9 406.2L360.2 411.2L357.6 411.2Z" fill="#111"/>
<text x="357.2" y="431" font-size="6.8" fill="#2c2c3a" textLength="19" lengthAdjust="spacingAndGlyphs" transform="rotate(-90 357.2 431)">ø65 h6</text>
<line x1="373" y1="404.5" x2="373" y2="475.5" stroke="#000" stroke-width="0.91"/>
<path d="M373 404.5L374.3 409.5L371.7 409.5Z" fill="#111"/>
<path d="M373 475.5L371.7 470.5L374.3 470.5Z" fill="#111"/>
<text x="371.3" y="456" font-size="6.8" fill="#2c2c3a" textLength="31" lengthAdjust="spacingAndGlyphs" transform="rotate(-90 371.3 456)">ø70 H7/d11</text>
<line x1="336.6" y1="387.8" x2="371" y2="387.8" stroke="#000" stroke-width="0.91"/>
<line x1="358.9" y1="396" x2="358.9" y2="406.2" stroke="#000" stroke-width="0.91"/>
<line x1="439.2" y1="404.5" x2="439.2" y2="475.5" stroke="#000" stroke-width="0.91"/>
<path d="M439.2 404.5L440.5 409.5L437.9 409.5Z" fill="#111"/>
<path d="M439.2 475.5L437.9 470.5L440.5 470.5Z" fill="#111"/>
<text x="437.4" y="456" font-size="6.8" fill="#2c2c3a" textLength="30" lengthAdjust="spacingAndGlyphs" transform="rotate(-90 437.4 456)">ø70 H7/p6</text>
<line x1="566.7" y1="398.2" x2="566.7" y2="480.7" stroke="#000" stroke-width="0.91"/>
<path d="M566.7 398.2L568 403.2L565.4 403.2Z" fill="#111"/>
<path d="M566.7 480.7L565.4 475.7L568 475.7Z" fill="#111"/>
<text x="564.8" y="446" font-size="6.8" fill="#2c2c3a" textLength="9" lengthAdjust="spacingAndGlyphs" transform="rotate(-90 564.8 446)">ø80</text>
<line x1="695.5" y1="387.7" x2="723.4" y2="387.7" stroke="#000" stroke-width="0.91"/>
<line x1="697.5" y1="387.7" x2="697.5" y2="463.2" stroke="#000" stroke-width="0.91"/>
<path d="M697.5 387.7L698.8 392.7L696.2 392.7Z" fill="#111"/>
<text x="695.7" y="442" font-size="6.8" fill="#2c2c3a" textLength="31" lengthAdjust="spacingAndGlyphs" transform="rotate(-90 695.7 442)">ø100 H7/h8</text>
<line x1="731.5" y1="406.2" x2="731.5" y2="444.4" stroke="#000" stroke-width="0.91"/>
<path d="M731.5 406.2L732.8 411.2L730.2 411.2Z" fill="#111"/>
<text x="729.7" y="435" font-size="6.8" fill="#2c2c3a" textLength="19" lengthAdjust="spacingAndGlyphs" transform="rotate(-90 729.7 435)">ø65 d9</text>
<line x1="743.3" y1="406.2" x2="743.3" y2="447" stroke="#000" stroke-width="0.91"/>
<path d="M743.3 406.2L744.6 411.2L742 411.2Z" fill="#111"/>
<text x="741.5" y="431" font-size="6.8" fill="#2c2c3a" textLength="19" lengthAdjust="spacingAndGlyphs" transform="rotate(-90 741.5 431)">ø65 H8</text>
<line x1="797.4" y1="387.7" x2="821.4" y2="387.7" stroke="#000" stroke-width="0.91"/>
<line x1="818.2" y1="387.7" x2="818.2" y2="465.6" stroke="#000" stroke-width="0.91"/>
<path d="M818.2 387.7L819.5 392.7L816.9 392.7Z" fill="#111"/>
<text x="816.4" y="443.5" font-size="6.8" fill="#2c2c3a" textLength="32" lengthAdjust="spacingAndGlyphs" transform="rotate(-90 816.4 443.5)">ø100H7/d11</text>
<line x1="830" y1="440" x2="845.4" y2="440" stroke="#000" stroke-width="0.91"/>
<path d="M830 440L837.5 438.4L837.5 441.6Z" fill="#111"/>
<text x="838" y="438.2" font-size="8.6" fill="#2c2c3a" textLength="5.4" lengthAdjust="spacingAndGlyphs">В</text>
<line x1="246.7" y1="526.8" x2="526.4" y2="526.8" stroke="#000" stroke-width="0.91"/>
<path d="M526.4 526.8L528.4 521.4L532 532.2L534 526.8H606.6" stroke="#000" stroke-width="0.91" fill="none"/>
<path d="M246.7 526.8L251.7 525.5L251.7 528.1Z" fill="#111"/>
<path d="M299.6 526.8L294.6 528.1L294.6 525.5Z" fill="#111"/>
<path d="M299.6 526.8L304.6 525.5L304.6 528.1Z" fill="#111"/>
<path d="M453 526.8L448 528.1L448 525.5Z" fill="#111"/>
<path d="M453 526.8L458 525.5L458 528.1Z" fill="#111"/>
<path d="M606.6 526.8L601.6 528.1L601.6 525.5Z" fill="#111"/>
<text x="266.5" y="524.6" font-size="7" fill="#2c2c3a" textLength="10.6" lengthAdjust="spacingAndGlyphs">52,5</text>
<text x="371.8" y="524.6" font-size="7" fill="#2c2c3a" textLength="8.5" lengthAdjust="spacingAndGlyphs">190</text>
<text x="506.6" y="524.6" font-size="7" fill="#2c2c3a" textLength="9.6" lengthAdjust="spacingAndGlyphs">300</text>
<path d="M299.6 551.6H526.4L528.4 546.2L532 557L534 551.6H760.3" stroke="#000" stroke-width="0.91" fill="none"/>
<path d="M299.6 551.6L304.6 550.3L304.6 552.9Z" fill="#111"/>
<path d="M760.3 551.6L755.3 552.9L755.3 550.3Z" fill="#111"/>
<text x="497" y="549.4" font-size="7" fill="#2c2c3a" textLength="10" lengthAdjust="spacingAndGlyphs">600</text>
<text x="189.3" y="550.4" font-size="5.9" fill="#2c2c3a" textLength="47" lengthAdjust="spacingAndGlyphs">В корпус в сборе</text>
<path d="M139.6 678.5V630.2 A71 71 0 0 1 281.4 630.2V678.1" stroke="#000" stroke-width="1.17" fill="none"/>
<path d="M210.4 568.4A61.8 61.8 0 0 0 210.4 692V681A50.8 50.8 0 0 1 210.4 579.4Z" fill="url(#h2)" stroke="#000" stroke-width="1.17"/>
<circle cx="167" cy="586.3" r="8.3" fill="url(#h2)" stroke="#000" stroke-width="0.9"/>
<circle cx="167" cy="673.3" r="8.3" fill="url(#h2)" stroke="#000" stroke-width="0.9"/>
<circle cx="210.4" cy="630.2" r="50.8" fill="#fff" stroke="#000" stroke-width="0.9"/>
<path d="M210.4 568.4A61.8 61.8 0 0 1 210.4 692" stroke="#000" stroke-width="1.17" fill="none"/>
<path d="M210.4 573.2A57 57 0 0 1 210.4 687.2" stroke="#000" stroke-width="0.91" fill="none"/>
<circle cx="167" cy="586.3" r="5.7" stroke="#000" stroke-width="1.17" fill="#333"/>
<circle cx="167" cy="586.3" r="5.7" fill="url(#hd)" stroke="#000" stroke-width="1"/>
<circle cx="167" cy="673.3" r="5.7" stroke="#000" stroke-width="1.17" fill="#333"/>
<circle cx="167" cy="673.3" r="5.7" fill="url(#hd)" stroke="#000" stroke-width="1"/>
<polygon points="262.12 588.42 256.32 594.22 248.4 592.1 246.28 584.18 252.08 578.38 260 580.5" fill="#fff" stroke="#000" stroke-width="0.9"/>
<circle cx="254.2" cy="586.3" r="7.05" stroke="#000" stroke-width="0.91" fill="none"/>
<circle cx="254.2" cy="586.3" r="5.4" stroke="#000" stroke-width="1.17" fill="none"/>
<line x1="249.6" y1="581.7" x2="258.8" y2="590.9" stroke="#000" stroke-width="0.91"/>
<line x1="249.6" y1="590.9" x2="258.8" y2="581.7" stroke="#000" stroke-width="0.91"/>
<polygon points="262.12 675.42 256.32 681.22 248.4 679.1 246.28 671.18 252.08 665.38 260 667.5" fill="#fff" stroke="#000" stroke-width="0.9"/>
<circle cx="254.2" cy="673.3" r="7.05" stroke="#000" stroke-width="0.91" fill="none"/>
<circle cx="254.2" cy="673.3" r="5.4" stroke="#000" stroke-width="1.17" fill="none"/>
<line x1="249.6" y1="668.7" x2="258.8" y2="677.9" stroke="#000" stroke-width="0.91"/>
<line x1="249.6" y1="677.9" x2="258.8" y2="668.7" stroke="#000" stroke-width="0.91"/>
<path d="M103.4 678.5H116.7V687.9H110.5V703.1H103.4Z" fill="url(#h2)" stroke="#000" stroke-width="1.17"/>
<path d="M134.7 678.5H158.5Q154 680.5 152.5 685Q150.7 690 150.7 695V703.1H141.8V687.9H134.7Z" fill="url(#h2)" stroke="#000" stroke-width="1.17"/>
<line x1="116.7" y1="687.9" x2="134.7" y2="687.9" stroke="#000" stroke-width="1.17"/>
<line x1="73.6" y1="678.5" x2="160" y2="678.5" stroke="#000" stroke-width="1.95"/>
<line x1="134.7" y1="701.4" x2="286.6" y2="701.4" stroke="#000" stroke-width="1.17"/>
<line x1="134.7" y1="701.4" x2="134.7" y2="703.1" stroke="#000" stroke-width="1.17"/>
<line x1="286.6" y1="701.4" x2="286.6" y2="703.1" stroke="#000" stroke-width="1.17"/>
<line x1="73.6" y1="703.1" x2="361.7" y2="703.1" stroke="#000" stroke-width="1.04"/>
<path d="M256.3 701.4V686.8L268.8 678.1H314.9Q318.9 678.1 318.9 682.1V703.1" stroke="#000" stroke-width="1.17" fill="none"/>
<line x1="139.6" y1="630.2" x2="337.4" y2="630.2" stroke="#000" stroke-width="0.91" stroke-dasharray="12 1.2 1.5 1.2"/>
<line x1="210.4" y1="557.5" x2="210.4" y2="706" stroke="#000" stroke-width="0.91" stroke-dasharray="12 1.2 1.5 1.2"/>
<line x1="126.3" y1="676" x2="126.3" y2="741" stroke="#000" stroke-width="0.91" stroke-dasharray="12 1.2 1.5 1.2"/>
<line x1="295.5" y1="676" x2="295.5" y2="741" stroke="#000" stroke-width="0.91" stroke-dasharray="12 1.2 1.5 1.2"/>
<line x1="135" y1="703.1" x2="135" y2="724.5" stroke="#000" stroke-width="0.91"/>
<line x1="287.3" y1="703.1" x2="287.3" y2="724.5" stroke="#000" stroke-width="0.91"/>
<line x1="135" y1="722.5" x2="287.3" y2="722.5" stroke="#000" stroke-width="0.91"/>
<path d="M135 722.5L140 721.2L140 723.8Z" fill="#111"/>
<path d="M287.3 722.5L282.3 723.8L282.3 721.2Z" fill="#111"/>
<text x="207.4" y="720.4" font-size="7" fill="#2c2c3a" textLength="7.6" lengthAdjust="spacingAndGlyphs">148</text>
<line x1="126.3" y1="739" x2="295.5" y2="739" stroke="#000" stroke-width="0.91"/>
<path d="M126.3 739L131.3 737.7L131.3 740.3Z" fill="#111"/>
<path d="M295.5 739L290.5 740.3L290.5 737.7Z" fill="#111"/>
<text x="207.4" y="736.9" font-size="7" fill="#2c2c3a" textLength="7.6" lengthAdjust="spacingAndGlyphs">166</text>
<line x1="103.4" y1="703.1" x2="103.4" y2="757" stroke="#000" stroke-width="0.91"/>
<line x1="318.9" y1="703.1" x2="318.9" y2="757" stroke="#000" stroke-width="0.91"/>
<line x1="103.4" y1="755" x2="318.9" y2="755" stroke="#000" stroke-width="0.91"/>
<path d="M103.4 755L108.4 753.7L108.4 756.3Z" fill="#111"/>
<path d="M318.9 755L313.9 756.3L313.9 753.7Z" fill="#111"/>
<text x="206.6" y="752.9" font-size="7" fill="#2c2c3a" textLength="8.2" lengthAdjust="spacingAndGlyphs">210</text>
<line x1="109.6" y1="649.8" x2="109.6" y2="678.5" stroke="#000" stroke-width="0.91"/>
<line x1="139.6" y1="649.8" x2="139.6" y2="678.5" stroke="#000" stroke-width="0.91"/>
<line x1="142.3" y1="649.8" x2="142.3" y2="678.5" stroke="#000" stroke-width="0.91"/>
<line x1="109.6" y1="651.8" x2="139.6" y2="651.8" stroke="#000" stroke-width="0.91"/>
<path d="M109.6 651.8L114.6 650.5L114.6 653.1Z" fill="#111"/>
<path d="M139.6 651.8L134.6 653.1L134.6 650.5Z" fill="#111"/>
<text x="121.4" y="649.8" font-size="6.8" fill="#2c2c3a" textLength="9" lengthAdjust="spacingAndGlyphs">ø32</text>
<line x1="90.9" y1="664.5" x2="90.9" y2="687.4" stroke="#000" stroke-width="0.91"/>
<path d="M90.9 678L89.6 673L92.2 673Z" fill="#111"/>
<path d="M90.9 680.4L92.2 685.4L89.6 685.4Z" fill="#111"/>
<text x="86.6" y="670" font-size="6.8" fill="#2c2c3a" transform="rotate(-90 86.6 670)">1</text>
<line x1="75.6" y1="678.5" x2="75.6" y2="703.1" stroke="#000" stroke-width="0.91"/>
<path d="M75.6 678.5L76.9 683.5L74.3 683.5Z" fill="#111"/>
<path d="M75.6 703.1L74.3 698.1L76.9 698.1Z" fill="#111"/>
<text x="73.6" y="693.8" font-size="6.8" fill="#2c2c3a" textLength="6" lengthAdjust="spacingAndGlyphs" transform="rotate(-90 73.6 693.8)">25</text>
<line x1="281.4" y1="630.2" x2="340" y2="630.2" stroke="#000" stroke-width="0.91"/>
<line x1="337.3" y1="630.2" x2="337.3" y2="703.1" stroke="#000" stroke-width="0.91"/>
<path d="M337.3 630.2L338.6 635.2L336 635.2Z" fill="#111"/>
<path d="M337.3 703.1L336 698.1L338.6 698.1Z" fill="#111"/>
<text x="335.4" y="673" font-size="6.8" fill="#2c2c3a" textLength="6" lengthAdjust="spacingAndGlyphs" transform="rotate(-90 335.4 673)">72</text>
<text x="336.8" y="666.4" font-size="4.2" fill="#2c2c3a" textLength="6" lengthAdjust="spacingAndGlyphs" transform="rotate(-90 336.8 666.4)">-0,1</text>
<line x1="210.4" y1="559.2" x2="361.7" y2="559.2" stroke="#000" stroke-width="0.91"/>
<line x1="359.6" y1="559.2" x2="359.6" y2="703.1" stroke="#000" stroke-width="0.91"/>
<path d="M359.6 559.2L360.9 564.2L358.3 564.2Z" fill="#111"/>
<path d="M359.6 703.1L358.3 698.1L360.9 698.1Z" fill="#111"/>
<text x="357.7" y="637.4" font-size="6.8" fill="#2c2c3a" textLength="13" lengthAdjust="spacingAndGlyphs" transform="rotate(-90 357.7 637.4)">141,5</text>
<line x1="179.37" y1="577.68" x2="241.43" y2="682.72" stroke="#000" stroke-width="0.91"/>
<path d="M179.37 577.68L183.03 581.32L180.79 582.65Z" fill="#111"/>
<path d="M241.43 682.72L237.77 679.08L240.01 677.75Z" fill="#111"/>
<text x="197.2" y="599.5" font-size="6.8" fill="#2c2c3a" textLength="11.5" lengthAdjust="spacingAndGlyphs" transform="rotate(59.42 197.2 599.5)">ø120</text>
<line x1="271.6" y1="568.2" x2="278.6" y2="574.6" stroke="#000" stroke-width="1.95"/>
<line x1="278.6" y1="574.6" x2="283.6" y2="579.2" stroke="#000" stroke-width="0.91"/>
<line x1="265.7" y1="574.4" x2="275.2" y2="566" stroke="#000" stroke-width="0.91"/>
<text x="283.2" y="574.4" font-size="8.4" fill="#2c2c3a" textLength="4.6" lengthAdjust="spacingAndGlyphs">Г</text>
<line x1="234.8" y1="605.8" x2="241.2" y2="611.8" stroke="#000" stroke-width="1.95"/>
<line x1="241.2" y1="611.8" x2="246" y2="616.2" stroke="#000" stroke-width="0.91"/>
<line x1="232.8" y1="607.4" x2="241.6" y2="599.4" stroke="#000" stroke-width="0.91"/>
<text x="234.4" y="621.2" font-size="8.4" fill="#2c2c3a" textLength="4.6" lengthAdjust="spacingAndGlyphs">Г</text>
<line x1="124.3" y1="598" x2="124.3" y2="613" stroke="#000" stroke-width="1.43"/>
<path d="M124.3 613.4L122.7 606.4L125.9 606.4Z" fill="#111"/>
<text x="127.6" y="605.6" font-size="10.4" fill="#2c2c3a" textLength="8" lengthAdjust="spacingAndGlyphs">Д</text>
<line x1="295" y1="771" x2="295" y2="785.6" stroke="#000" stroke-width="1.43"/>
<path d="M295 770.4L296.6 777.4L293.4 777.4Z" fill="#111"/>
<text x="297.8" y="786.2" font-size="10.4" fill="#2c2c3a" textLength="7.4" lengthAdjust="spacingAndGlyphs">Е</text>
<text x="568" y="574" font-size="13.7" fill="#334" textLength="9" lengthAdjust="spacingAndGlyphs">Д</text>
<path d="M574 602H541Q537 602 537 606V651Q537 655 541 655H574" stroke="#000" stroke-width="1.17" fill="#fff"/>
<circle cx="560" cy="628" r="16.7" stroke="#000" stroke-width="1.17" fill="none"/>
<circle cx="560" cy="628" r="8.7" stroke="#000" stroke-width="1.17" fill="none"/>
<circle cx="545" cy="647.4" r="4.6" stroke="#000" stroke-width="1.17" fill="none"/>
<line x1="560" y1="608.5" x2="560" y2="647.5" stroke="#000" stroke-width="0.91" stroke-dasharray="12 1.2 1.5 1.2"/>
<path d="M645.8 592H577Q574 592 574 595V607Q574 610 577 610H645.8" stroke="#000" stroke-width="1.17" fill="#fff"/>
<path d="M645.8 647.4H577Q574 647.4 574 650.4V663Q574 666 577 666H645.8" stroke="#000" stroke-width="1.17" fill="#fff"/>
<line x1="574" y1="600.6" x2="645.8" y2="600.6" stroke="#000" stroke-width="1.04"/>
<line x1="574" y1="655" x2="645.8" y2="655" stroke="#000" stroke-width="1.04"/>
<line x1="584" y1="610" x2="584" y2="647.4" stroke="#000" stroke-width="1.04"/>
<line x1="592.4" y1="610" x2="592.4" y2="647.4" stroke="#000" stroke-width="1.04"/>
<line x1="608" y1="610" x2="608" y2="647.4" stroke="#000" stroke-width="1.04"/>
<rect x="593" y="579.4" width="18" height="12.2" rx="1.5" stroke="#000" stroke-width="1.17" fill="#fff"/>
<line x1="597.5" y1="579.4" x2="597.5" y2="591.6" stroke="#000" stroke-width="0.91"/>
<line x1="606.5" y1="579.4" x2="606.5" y2="591.6" stroke="#000" stroke-width="0.91"/>
<rect x="593.6" y="666" width="16.8" height="5.6" rx="1.2" stroke="#000" stroke-width="1.17" fill="#fff"/>
<line x1="597.5" y1="666" x2="597.5" y2="671.6" stroke="#000" stroke-width="0.91"/>
<line x1="606.5" y1="666" x2="606.5" y2="671.6" stroke="#000" stroke-width="0.91"/>
<line x1="601.6" y1="575.5" x2="601.6" y2="673.5" stroke="#000" stroke-width="0.91" stroke-dasharray="12 1.2 1.5 1.2"/>
<path d="M645.8 589.5C647.8 600 643.8 607 645.8 616C647.8 626 643.8 633 645.8 642C647.8 652 643.8 659 645.8 668" stroke="#000" stroke-width="0.91" fill="none"/>
<path d="M649.6 589.5C651.6 600 647.6 607 649.6 616C651.6 626 647.6 633 649.6 642C651.6 652 647.6 659 649.6 668" stroke="#000" stroke-width="0.91" fill="none"/>
<line x1="515" y1="602" x2="574" y2="602" stroke="#000" stroke-width="0.91"/>
<line x1="515" y1="655" x2="574" y2="655" stroke="#000" stroke-width="0.91"/>
<line x1="518" y1="602" x2="518" y2="655" stroke="#000" stroke-width="0.91"/>
<path d="M518 602L519.3 607L516.7 607Z" fill="#111"/>
<path d="M518 655L516.7 650L519.3 650Z" fill="#111"/>
<text x="516.2" y="631.4" font-size="7" fill="#2c2c3a" textLength="6.4" lengthAdjust="spacingAndGlyphs" transform="rotate(-90 516.2 631.4)">52</text>
<path d="M530 589H545L563 636" stroke="#000" stroke-width="0.91" fill="none"/>
<path d="M563 636L559.99 631.8L562.42 630.87Z" fill="#111"/>
<path d="M556.8 619.6L559.81 623.8L557.38 624.73Z" fill="#111"/>
<text x="533.6" y="585.8" font-size="6.8" fill="#2c2c3a" textLength="8.6" lengthAdjust="spacingAndGlyphs">ø17</text>
<line x1="529" y1="640" x2="529" y2="662" stroke="#000" stroke-width="0.91"/>
<path d="M529 647.4L527.7 642.4L530.3 642.4Z" fill="#111"/>
<path d="M529 655L530.3 660L527.7 660Z" fill="#111"/>
<line x1="529" y1="647.4" x2="545" y2="647.4" stroke="#000" stroke-width="0.91"/>
<text x="527" y="652.8" font-size="6.2" fill="#2c2c3a" transform="rotate(-90 527 652.8)">6</text>
<line x1="537" y1="655" x2="537" y2="669.4" stroke="#000" stroke-width="0.91"/>
<line x1="545" y1="652" x2="545" y2="669.4" stroke="#000" stroke-width="0.91"/>
<line x1="530.5" y1="667.4" x2="553.4" y2="667.4" stroke="#000" stroke-width="0.91"/>
<path d="M537 667.4L532 668.7L532 666.1Z" fill="#111"/>
<path d="M545 667.4L550 666.1L550 668.7Z" fill="#111"/>
<text x="540.2" y="665.6" font-size="6.2" fill="#2c2c3a">8</text>
<text x="699" y="570" font-size="13.7" fill="#334" textLength="7" lengthAdjust="spacingAndGlyphs">Е</text>
<path d="M649.6 592H713.4Q716.4 592 716.4 595V663Q716.4 666 713.4 666H649.6" stroke="#000" stroke-width="1.17" fill="#fff"/>
<line x1="651" y1="601.5" x2="716.4" y2="601.5" stroke="#000" stroke-width="2.08"/>
<line x1="651" y1="655.5" x2="716.4" y2="655.5" stroke="#000" stroke-width="2.08"/>
<path d="M651 603.6H677L681.6 607.4H705V649.6H681.6L677 653.4H651" stroke="#000" stroke-width="1.04" fill="none"/>
<path d="M651 608.4H674.6L679.6 612.6" stroke="#000" stroke-width="0.91" fill="none"/>
<path d="M651 648.6H674.6L679.6 644.4" stroke="#000" stroke-width="0.91" fill="none"/>
<path d="M716.4 602H749Q753 602 753 606V651Q753 655 749 655H716.4" stroke="#000" stroke-width="1.17" fill="#fff"/>
<line x1="720.4" y1="602" x2="720.4" y2="655" stroke="#000" stroke-width="1.04"/>
<rect x="713" y="612" width="33" height="33" rx="4" stroke="#000" stroke-width="1.17" fill="#fff"/>
<circle cx="729.4" cy="628" r="8.8" stroke="#000" stroke-width="1.17" fill="none"/>
<line x1="729.4" y1="617.5" x2="729.4" y2="638.5" stroke="#000" stroke-width="0.91"/>
<circle cx="744.4" cy="647" r="4.4" stroke="#000" stroke-width="1.17" fill="none"/>
<path d="M738.4 647A6 6 0 0 1 744.4 641" stroke="#000" stroke-width="0.91" fill="none"/>
<line x1="739.6" y1="647" x2="749.4" y2="647" stroke="#000" stroke-width="0.91"/>
<line x1="744.4" y1="642" x2="744.4" y2="652" stroke="#000" stroke-width="0.91"/>
<rect x="680" y="586" width="17" height="6" rx="1.2" stroke="#000" stroke-width="1.17" fill="#fff"/>
<line x1="684.2" y1="586" x2="684.2" y2="592" stroke="#000" stroke-width="0.91"/>
<line x1="692.8" y1="586" x2="692.8" y2="592" stroke="#000" stroke-width="0.91"/>
<rect x="680" y="666" width="17" height="11" rx="1.5" stroke="#000" stroke-width="1.17" fill="#fff"/>
<line x1="684.2" y1="666" x2="684.2" y2="677" stroke="#000" stroke-width="0.91"/>
<line x1="692.8" y1="666" x2="692.8" y2="677" stroke="#000" stroke-width="0.91"/>
<path d="M682 677Q688.4 680.6 695 677" stroke="#000" stroke-width="1.04" fill="none"/>
<line x1="688.4" y1="583" x2="688.4" y2="681.5" stroke="#000" stroke-width="0.91" stroke-dasharray="12 1.2 1.5 1.2"/>
<line x1="535" y1="628" x2="756" y2="628" stroke="#000" stroke-width="0.91" stroke-dasharray="12 1.2 1.5 1.2"/>
<path d="M739.6 657L774 582H838" stroke="#000" stroke-width="0.91" fill="none"/>
<path d="M739.6 657L740.5 651.91L742.86 652.99Z" fill="#111"/>
<text x="775" y="579.6" font-size="6.8" fill="#2c2c3a" textLength="6" lengthAdjust="spacingAndGlyphs">ø8</text>
<text x="775" y="589.4" font-size="6" fill="#2c2c3a" textLength="51" lengthAdjust="spacingAndGlyphs">2 отв. под штифты</text>
<text x="775" y="596.4" font-size="6" fill="#2c2c3a" textLength="28" lengthAdjust="spacingAndGlyphs">конические</text>
<text x="446.4" y="676.8" font-size="14.3" fill="#334" textLength="19.2" lengthAdjust="spacingAndGlyphs">Г–Г</text>
<circle cx="477.6" cy="671.8" r="5.3" stroke="#223" stroke-width="1.23" fill="none"/>
<path d="M469.9 668.4L473 671.2L474.1 667.2" stroke="#223" stroke-width="1.17" fill="none"/>
<line x1="428.3" y1="691" x2="428.3" y2="705.6" stroke="#000" stroke-width="0.91"/>
<line x1="481.6" y1="691" x2="481.6" y2="705.6" stroke="#000" stroke-width="0.91"/>
<line x1="428.3" y1="693.3" x2="481.6" y2="693.3" stroke="#000" stroke-width="0.91"/>
<path d="M428.3 693.3L433.3 692L433.3 694.6Z" fill="#111"/>
<path d="M481.6 693.3L476.6 694.6L476.6 692Z" fill="#111"/>
<text x="451.4" y="691.2" font-size="7" fill="#2c2c3a" textLength="6.4" lengthAdjust="spacingAndGlyphs">52</text>
<path d="M418.1 701.6H428.3V706.4H418.1Z" fill="url(#hm)" stroke="#000" stroke-width="1.04"/>
<path d="M481.6 701.6H491.2V706.4H481.6Z" fill="url(#hm)" stroke="#000" stroke-width="1.04"/>
<path d="M428.3 701.6H481.6V706.4H428.3Z" fill="url(#hd)" stroke="#000" stroke-width="1.04"/>
<path d="M418.1 716.8H428.3V726.4H441.6V730.6C436 733.5 431 729.5 426 732C423 733.5 420.5 730.5 418.1 732Z" fill="url(#hm)" stroke="#000" stroke-width="1.04"/>
<path d="M491.2 716.8H481.6V726.4H472.8V730.6C477 733.5 482 729.5 486 732C488 733 490 730.5 491.2 732Z" fill="url(#hm2)" stroke="#000" stroke-width="1.04"/>
<path d="M428.3 716.8H481.6V726.4H428.3Z" fill="url(#hd)" stroke="#000" stroke-width="1.04"/>
<path d="M441.6 726.4V730.6Q457 727.8 472.8 730.6V726.4" stroke="#000" stroke-width="1.04" fill="#fff"/>
<rect x="418.1" y="706.4" width="74" height="10.4" rx="0" stroke="#000" stroke-width="1.17" fill="#fff"/>
<line x1="430.9" y1="706.4" x2="430.9" y2="716.8" stroke="#000" stroke-width="1.04"/>
<rect x="418.1" y="708" width="12.8" height="7.2" rx="0" stroke="#000" stroke-width="0.91" fill="#fff"/>
<rect x="408" y="701.6" width="7.6" height="19.2" rx="1.2" stroke="#000" stroke-width="1.17" fill="#fff"/>
<line x1="408" y1="707.6" x2="415.6" y2="707.6" stroke="#000" stroke-width="0.91"/>
<line x1="408" y1="714.8" x2="415.6" y2="714.8" stroke="#000" stroke-width="0.91"/>
<path d="M408 706.4Q402.6 711.2 408 716" stroke="#000" stroke-width="1.17" fill="#fff"/>
<rect x="415.6" y="703.6" width="2.5" height="15.2" rx="0" stroke="#000" stroke-width="0.91" fill="#fff"/>
<rect x="492" y="702.4" width="5.6" height="17.6" rx="1.2" stroke="#000" stroke-width="1.17" fill="#fff"/>
<line x1="492" y1="707.6" x2="497.6" y2="707.6" stroke="#000" stroke-width="0.91"/>
<line x1="492" y1="714.8" x2="497.6" y2="714.8" stroke="#000" stroke-width="0.91"/>
<line x1="402" y1="711.2" x2="500.4" y2="711.2" stroke="#000" stroke-width="0.91" stroke-dasharray="12 1.2 1.5 1.2"/>
<line x1="418.1" y1="730" x2="418.1" y2="750" stroke="#000" stroke-width="0.91"/>
<line x1="491.2" y1="730" x2="491.2" y2="750" stroke="#000" stroke-width="0.91"/>
<line x1="418.1" y1="748" x2="491.2" y2="748" stroke="#000" stroke-width="0.91"/>
<path d="M418.1 748L423.1 746.7L423.1 749.3Z" fill="#111"/>
<path d="M491.2 748L486.2 749.3L486.2 746.7Z" fill="#111"/>
<text x="452.2" y="745.8" font-size="7" fill="#2c2c3a" textLength="5.6" lengthAdjust="spacingAndGlyphs">71</text>
</svg>
<div class="tabbar">
<div class="tab" style="left:-46.6px"><span class="tt">спецификация о....</span></div>
<div class="tab" style="left:115.0px"><span class="tt">общий вид о.pdf</span></div>
<div class="tab act" style="left:276.8px"><span class="tt">приводной вал о....</span><span class="x">×</span></div>
<div class="tab" style="left:438.6px"><span class="tt">муфта о.pdf</span></div>
<div class="tab" style="left:600.2px"><span class="tt">колесо тихоходн...</span></div>
<div class="tab" style="left:762.0px"><span class="tt">вал тихоходный ...</span></div>
<div class="tab" style="left:922.6px;padding-left:9px"><span class="tt">Чертеж вала.pdf</span></div>
</div>
<div class="toolbar">
<span class="pg" style="left:159px;width:26px;text-align:center">1</span>
<span class="pg" style="left:190.5px;word-spacing:4px">/ 1</span>
<span class="pg" style="left:423.5px">25%</span>
<svg class="tbi" width="1000" height="44" viewBox="0 27 1000 44"><circle cx="86.8" cy="49" r="9" fill="none" stroke="#c4c4c4" stroke-width="1.9"/><path d="M86.8 54.5V44.3M82.39999999999999 48.6l4.4 -4.4l4.4 4.4" fill="none" stroke="#c4c4c4" stroke-width="1.9"/><circle cx="128.3" cy="49" r="9" fill="none" stroke="#c4c4c4" stroke-width="1.9"/><path d="M128.3 43.5V53.7M123.9 49.4l4.4 4.4l4.4 -4.4" fill="none" stroke="#c4c4c4" stroke-width="1.9"/><rect x="159.2" y="60.8" width="25.8" height="1" fill="#cfcfcf"/><rect x="412" y="60.8" width="66.5" height="1" fill="#cfcfcf"/><rect x="226" y="36" width="1" height="26" fill="#d4d4d4"/><rect x="592.8" y="36" width="1" height="26" fill="#d4d4d4"/><path d="M252.6 39.2L252.6 55.4L256.5 52L259.4 58.2L262.2 56.9L259.3 50.9L264 50.5Z" fill="#1c6fd0"/><path d="M297 59.8C295 57.4 291.4 54.6 289.2 52C287.6 50 290 48 291.8 49.6L295 52.6V43C295 40.6 298.5 40.6 298.5 43V48V41C298.5 38.6 302 38.6 302 41V48V42C302 39.8 305.4 39.8 305.4 42V49V45.6C305.4 43.4 308.6 43.4 308.6 45.6V53C308.6 56.4 307.4 58 306.4 59.8Z" fill="#fff" stroke="#6e6e6e" stroke-width="1.7" stroke-linejoin="round"/><circle cx="340.3" cy="48.6" r="9" fill="none" stroke="#6e6e6e" stroke-width="1.9"/><path d="M335.6 48.6H345" stroke="#6e6e6e" stroke-width="1.9"/><circle cx="381.7" cy="48.6" r="9" fill="none" stroke="#6e6e6e" stroke-width="1.9"/><path d="M376.9 48.6H386.5M381.7 43.8V53.4" stroke="#6e6e6e" stroke-width="1.9"/><path d="M465 47.2h6.6l-3.3 3.6Z" fill="#6e6e6e"/><path d="M502.3 40.2h9.8l4.6 4.6v12.9h-14.4Z" fill="#fff" stroke="#1b6fd0" stroke-width="2" stroke-linejoin="round"/><path d="M511.6 40.6v4.6h4.6" fill="none" stroke="#1b6fd0" stroke-width="1.1"/><path d="M509 45.6v7.2M505.4 49.2h7.2" stroke="#1b6fd0" stroke-width="1" stroke-dasharray="1.2 0.8"/><path d="M509 43.5l2.5 3.1h-5ZM509 55.2l2.5 -3.1h-5ZM503.4 49.2l3.1 -2.5v5ZM514.8 49.2l-3.1 -2.5v5Z" fill="#1b6fd0"/><path d="M522.6 47.3h7.2l-3.6 3.9Z" fill="#1b6fd0"/><rect x="553.2" y="40.8" width="18.8" height="6.4" rx="0.8" fill="#fff" stroke="#6e6e6e" stroke-width="1.9"/><path d="M556 44h2.1M559.9 44h2.1M563.8 44h2.1M567.7 44h2.1" stroke="#6e6e6e" stroke-width="1.8"/><path d="M562.6 49.6V58.2M557.8 54.2l4.8 4.6l4.8 -4.6" fill="none" stroke="#6e6e6e" stroke-width="1.9"/><path d="M615.6 41.2h16.2v12h-7.2l-4.6 4.8v-4.8h-4.4Z" fill="#e9e9e9" stroke="#6e6e6e" stroke-width="1.9" stroke-linejoin="round"/><path d="M618.4 45h10.6M618.4 47.6h10.6" stroke="#8a8a8a" stroke-width="1.1"/><rect x="660.8" y="54.8" width="15" height="4.2" fill="#dedede"/><g transform="rotate(-42.5 667.2 47.6)"><rect x="658.6" y="44.7" width="18.4" height="5.8" rx="2.6" fill="#e4e4e4" stroke="#6e6e6e" stroke-width="1.7"/><path d="M659 44.2v6.8l-3.4 -0.4l-3.6 -3l3.6 -3Z" fill="#6e6e6e"/></g><path d="M707.2 42.6l2.6 -3.4l5 4.6l-2.6 3.2Z" fill="#dcdcdc"/><path d="M696.8 57.8l2.8 -11.2l7.8 -4.2l5 4.8l-4.2 7.6Z" fill="#fff" stroke="#6e6e6e" stroke-width="1.7" stroke-linejoin="round"/><path d="M697.2 57.4l5.6 -5.8" stroke="#6e6e6e" stroke-width="1.2"/><circle cx="703.3" cy="51.2" r="1.1" fill="#6e6e6e"/><path d="M708.2 42.4l-1.2 -3.2M712.4 46.8l3 -1.2" stroke="#6e6e6e" stroke-width="1.5"/><path d="M708.6 57.8l1.6 -3.4l1.4 3.4M712.6 57.6c0.2 -2 1.4 -2.6 1.6 -0.6c0.3 1 1.2 0.6 1.4 -0.8c0.3 1.2 0.8 1.6 1.6 1.2" fill="none" stroke="#6e6e6e" stroke-width="1.2"/><path d="M741 42.6V40h9l5.6 5.6v2.4M741 50V57.4h6" fill="none" stroke="#6e6e6e" stroke-width="1.9" stroke-linejoin="round"/><path d="M749.8 40.4v5.4h5.6" fill="none" stroke="#6e6e6e" stroke-width="1.1"/><rect x="737.2" y="42.8" width="8.6" height="5" rx="0.8" fill="#6e6e6e"/><path d="M748.4 58.8l1.2 -3.8l7.4 -7l2.8 2.8l-7.4 7Z" fill="#e6e6e6" stroke="#6e6e6e" stroke-width="1.4" stroke-linejoin="round"/><path d="M781.6 42.8h18.2M787.6 42.6v-2.6h6.8v2.6M783.6 43.2l1.4 15.2h11.8l1.4 -15.2" fill="none" stroke="#c4c4c4" stroke-width="1.9"/><path d="M787.7 46v10M790.8 46v10M793.9 46v10" stroke="#c4c4c4" stroke-width="1.2"/><path d="M827 57.3a8.6 8.6 0 1 1 12.3 -5.1" fill="none" stroke="#6e6e6e" stroke-width="2.2"/><path d="M834.2 53.4l8.2 1.4l-6.2 3.4Z" fill="#6e6e6e"/></svg>
</div>
</body></html>
